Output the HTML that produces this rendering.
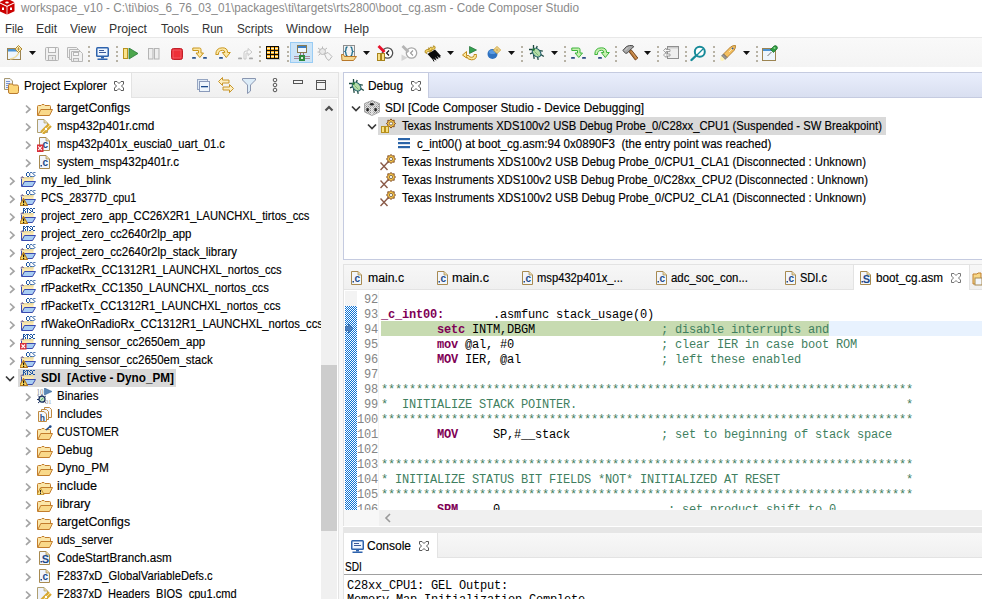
<!DOCTYPE html>
<html><head><meta charset="utf-8"><style>
html,body{margin:0;padding:0;width:982px;height:599px;overflow:hidden;background:#fff;position:relative}
body{font-family:'Liberation Sans', sans-serif}
</style></head><body>
<div style="position:absolute;left:0px;top:0px;width:982px;height:37px;background:#fff"></div><div style="position:absolute;left:0px;top:37px;width:982px;height:30px;background:linear-gradient(#f9f9f9,#f4f4f4);border-top:1px solid #e8e8e8;box-sizing:border-box"></div><div style="position:absolute;left:0px;top:67px;width:982px;height:532px;background:#f8f8f8"></div><div style="position:absolute;left:0px;top:67px;width:982px;height:5px;background:#fff"></div><div style="position:absolute;left:0px;top:72px;width:339px;height:527px;background:#fff;border-right:1px solid #e3e3e3;border-top:1px solid #e3e3e3;box-sizing:border-box"></div><div style="position:absolute;left:131px;top:73px;width:207px;height:24px;background:linear-gradient(#f7f7f7,#f0f0f0);border-left:1px solid #e3e3e3;box-sizing:border-box"></div><div style="position:absolute;left:131px;top:97px;width:207px;height:1px;background:#e3e3e3"></div><div style="position:absolute;left:321px;top:99px;width:16px;height:500px;background:#f0f0f0"></div><div style="position:absolute;left:321px;top:365px;width:16px;height:166px;background:#cdcdcd"></div><svg style="position:absolute;left:24px;top:104px" width="8" height="11" viewBox="0 0 8 11"><path d="M2 1.5 L6 5.2 L2 8.9" fill="none" stroke="#a4a4a4" stroke-width="1.7"/></svg><svg style="position:absolute;left:37px;top:101px" width="16" height="16" viewBox="0 0 16 16"><path d="M0.5 14.5 V5.5 Q0.5 4.5 1.5 4.5 H4 L5 3.5 H7 L8 4.5 H12.5 Q13.5 4.5 13.5 5.5 V8" fill="#fbe6a8" stroke="#c27d2c"/><path d="M0.8 14.5 L3.8 8.5 H15.5 L12.5 14.5 Z" fill="#f9d98a" stroke="#c27d2c" stroke-linejoin="round"/></svg><svg style="position:absolute;left:24px;top:122px" width="8" height="11" viewBox="0 0 8 11"><path d="M2 1.5 L6 5.2 L2 8.9" fill="none" stroke="#a4a4a4" stroke-width="1.7"/></svg><svg style="position:absolute;left:37px;top:118px" width="16" height="16" viewBox="0 0 16 16"><path d="M0.5 1.5 H7 L10.5 5 V14.5 H0.5 Z" fill="#eef2fb" stroke="#b0a070"/><path d="M7 1.5 V5 H10.5" fill="#e8d8a8" stroke="#b0a070" stroke-width="0.7"/><path d="M4 14 L12 6 M6 16 L14 8" stroke="#d8a830" stroke-width="2.2"/><path d="M5 15 L13 7" stroke="#f8e090" stroke-width="1"/><circle cx="9" cy="11" r="1.2" fill="#fff"/></svg><svg style="position:absolute;left:24px;top:140px" width="8" height="11" viewBox="0 0 8 11"><path d="M2 1.5 L6 5.2 L2 8.9" fill="none" stroke="#a4a4a4" stroke-width="1.7"/></svg><svg style="position:absolute;left:37px;top:136px" width="16" height="16" viewBox="0 0 16 16"><path d="M2.5 1.5 H9 L12.5 5 V14.5 H2.5 Z" fill="#f2f6fc" stroke="#a88a50"/><path d="M9 1.5 V5 H12.5" fill="#e8d8a8" stroke="#a88a50" stroke-width="0.7"/><text x="8.3" y="12" font-family="Liberation Sans" font-size="10" font-weight="bold" fill="#1e4a8a" text-anchor="middle">c</text><rect x="3.5" y="11" width="1.5" height="1.5" fill="#1e4a8a"/><rect x="-0.5" y="8.5" width="7" height="7.5" fill="#d8303a"/><path d="M1.2 10.3 L4.8 14.2 M4.8 10.3 L1.2 14.2" stroke="#fff" stroke-width="1.1"/></svg><svg style="position:absolute;left:24px;top:158px" width="8" height="11" viewBox="0 0 8 11"><path d="M2 1.5 L6 5.2 L2 8.9" fill="none" stroke="#a4a4a4" stroke-width="1.7"/></svg><svg style="position:absolute;left:37px;top:154px" width="16" height="16" viewBox="0 0 16 16"><path d="M2.5 1.5 H9 L12.5 5 V14.5 H2.5 Z" fill="#f2f6fc" stroke="#a88a50"/><path d="M9 1.5 V5 H12.5" fill="#e8d8a8" stroke="#a88a50" stroke-width="0.7"/><text x="8.3" y="12" font-family="Liberation Sans" font-size="10" font-weight="bold" fill="#1e4a8a" text-anchor="middle">c</text><rect x="3.5" y="11" width="1.5" height="1.5" fill="#1e4a8a"/></svg><svg style="position:absolute;left:8px;top:176px" width="8" height="11" viewBox="0 0 8 11"><path d="M2 1.5 L6 5.2 L2 8.9" fill="none" stroke="#a4a4a4" stroke-width="1.7"/></svg><svg style="position:absolute;left:20px;top:172px" width="16" height="16" viewBox="0 0 16 16"><rect x="1.5" y="5" width="12" height="9.5" fill="#fbe9b0"/><rect x="3" y="5" width="10.5" height="1.6" fill="#e8d8a0"/><path d="M0.5 6 L2.5 4.5 L4 6" fill="#8a7a98" stroke="#8a7a98" stroke-width="1"/><path d="M1.5 6.5 V14.5" stroke="#3a4ab0" stroke-width="1"/><path d="M1.8 14.5 L4.5 9.5 H15.5 L12.5 14.5 Z" fill="#a8cdf4" stroke="#3a4ab0" stroke-linejoin="round"/><rect x="7.00" y="0" width="1" height="1" fill="#1f55a0"/><rect x="8.00" y="0" width="1" height="1" fill="#1f55a0"/><rect x="6.00" y="1" width="1" height="1" fill="#1f55a0"/><rect x="6.00" y="2" width="1" height="1" fill="#1f55a0"/><rect x="6.00" y="3" width="1" height="1" fill="#1f55a0"/><rect x="7.00" y="4" width="1" height="1" fill="#1f55a0"/><rect x="8.00" y="4" width="1" height="1" fill="#1f55a0"/><rect x="10.20" y="0" width="1" height="1" fill="#1f55a0"/><rect x="11.20" y="0" width="1" height="1" fill="#1f55a0"/><rect x="9.20" y="1" width="1" height="1" fill="#1f55a0"/><rect x="9.20" y="2" width="1" height="1" fill="#1f55a0"/><rect x="9.20" y="3" width="1" height="1" fill="#1f55a0"/><rect x="10.20" y="4" width="1" height="1" fill="#1f55a0"/><rect x="11.20" y="4" width="1" height="1" fill="#1f55a0"/><rect x="13.40" y="0" width="1" height="1" fill="#1f55a0"/><rect x="14.40" y="0" width="1" height="1" fill="#1f55a0"/><rect x="12.40" y="1" width="1" height="1" fill="#1f55a0"/><rect x="13.40" y="2" width="1" height="1" fill="#1f55a0"/><rect x="14.40" y="3" width="1" height="1" fill="#1f55a0"/><rect x="12.40" y="4" width="1" height="1" fill="#1f55a0"/><rect x="13.40" y="4" width="1" height="1" fill="#1f55a0"/></svg><svg style="position:absolute;left:8px;top:194px" width="8" height="11" viewBox="0 0 8 11"><path d="M2 1.5 L6 5.2 L2 8.9" fill="none" stroke="#a4a4a4" stroke-width="1.7"/></svg><svg style="position:absolute;left:20px;top:190px" width="16" height="16" viewBox="0 0 16 16"><rect x="1.5" y="5" width="12" height="9.5" fill="#fbe9b0"/><rect x="3" y="5" width="10.5" height="1.6" fill="#e8d8a0"/><path d="M0.5 6 L2.5 4.5 L4 6" fill="#8a7a98" stroke="#8a7a98" stroke-width="1"/><path d="M1.5 6.5 V14.5" stroke="#3a4ab0" stroke-width="1"/><path d="M1.8 14.5 L4.5 9.5 H15.5 L12.5 14.5 Z" fill="#a8cdf4" stroke="#3a4ab0" stroke-linejoin="round"/><rect x="7.00" y="0" width="1" height="1" fill="#1f55a0"/><rect x="8.00" y="0" width="1" height="1" fill="#1f55a0"/><rect x="6.00" y="1" width="1" height="1" fill="#1f55a0"/><rect x="6.00" y="2" width="1" height="1" fill="#1f55a0"/><rect x="6.00" y="3" width="1" height="1" fill="#1f55a0"/><rect x="7.00" y="4" width="1" height="1" fill="#1f55a0"/><rect x="8.00" y="4" width="1" height="1" fill="#1f55a0"/><rect x="10.20" y="0" width="1" height="1" fill="#1f55a0"/><rect x="11.20" y="0" width="1" height="1" fill="#1f55a0"/><rect x="9.20" y="1" width="1" height="1" fill="#1f55a0"/><rect x="9.20" y="2" width="1" height="1" fill="#1f55a0"/><rect x="9.20" y="3" width="1" height="1" fill="#1f55a0"/><rect x="10.20" y="4" width="1" height="1" fill="#1f55a0"/><rect x="11.20" y="4" width="1" height="1" fill="#1f55a0"/><rect x="13.40" y="0" width="1" height="1" fill="#1f55a0"/><rect x="14.40" y="0" width="1" height="1" fill="#1f55a0"/><rect x="12.40" y="1" width="1" height="1" fill="#1f55a0"/><rect x="13.40" y="2" width="1" height="1" fill="#1f55a0"/><rect x="14.40" y="3" width="1" height="1" fill="#1f55a0"/><rect x="12.40" y="4" width="1" height="1" fill="#1f55a0"/><rect x="13.40" y="4" width="1" height="1" fill="#1f55a0"/><path d="M3.5 8.5 L7.5 15.5 H-0.5 Z" fill="#f8d860" stroke="#b87a1c" stroke-width="1.1" stroke-linejoin="round"/><rect x="3" y="10.5" width="1.2" height="2.8" fill="#111"/><rect x="3" y="14" width="1.2" height="1.2" fill="#111"/></svg><svg style="position:absolute;left:8px;top:212px" width="8" height="11" viewBox="0 0 8 11"><path d="M2 1.5 L6 5.2 L2 8.9" fill="none" stroke="#a4a4a4" stroke-width="1.7"/></svg><svg style="position:absolute;left:20px;top:208px" width="16" height="16" viewBox="0 0 16 16"><rect x="1.5" y="5" width="12" height="9.5" fill="#fbe9b0"/><rect x="3" y="5" width="10.5" height="1.6" fill="#e8d8a0"/><path d="M0.5 6 L2.5 4.5 L4 6" fill="#8a7a98" stroke="#8a7a98" stroke-width="1"/><path d="M1.5 6.5 V14.5" stroke="#3a4ab0" stroke-width="1"/><path d="M1.8 14.5 L4.5 9.5 H15.5 L12.5 14.5 Z" fill="#a8cdf4" stroke="#3a4ab0" stroke-linejoin="round"/><rect x="3.00" y="0" width="1" height="1" fill="#1f55a0"/><rect x="4.00" y="0" width="1" height="1" fill="#1f55a0"/><rect x="3.00" y="1" width="1" height="1" fill="#1f55a0"/><rect x="5.00" y="1" width="1" height="1" fill="#1f55a0"/><rect x="3.00" y="2" width="1" height="1" fill="#1f55a0"/><rect x="4.00" y="2" width="1" height="1" fill="#1f55a0"/><rect x="3.00" y="3" width="1" height="1" fill="#1f55a0"/><rect x="5.00" y="3" width="1" height="1" fill="#1f55a0"/><rect x="3.00" y="4" width="1" height="1" fill="#1f55a0"/><rect x="5.00" y="4" width="1" height="1" fill="#1f55a0"/><rect x="6.00" y="0" width="1" height="1" fill="#1f55a0"/><rect x="7.00" y="0" width="1" height="1" fill="#1f55a0"/><rect x="8.00" y="0" width="1" height="1" fill="#1f55a0"/><rect x="7.00" y="1" width="1" height="1" fill="#1f55a0"/><rect x="7.00" y="2" width="1" height="1" fill="#1f55a0"/><rect x="7.00" y="3" width="1" height="1" fill="#1f55a0"/><rect x="7.00" y="4" width="1" height="1" fill="#1f55a0"/><rect x="10.00" y="0" width="1" height="1" fill="#1f55a0"/><rect x="11.00" y="0" width="1" height="1" fill="#1f55a0"/><rect x="9.00" y="1" width="1" height="1" fill="#1f55a0"/><rect x="10.00" y="2" width="1" height="1" fill="#1f55a0"/><rect x="11.00" y="3" width="1" height="1" fill="#1f55a0"/><rect x="9.00" y="4" width="1" height="1" fill="#1f55a0"/><rect x="10.00" y="4" width="1" height="1" fill="#1f55a0"/><rect x="13.00" y="0" width="1" height="1" fill="#1f55a0"/><rect x="14.00" y="0" width="1" height="1" fill="#1f55a0"/><rect x="12.00" y="1" width="1" height="1" fill="#1f55a0"/><rect x="12.00" y="2" width="1" height="1" fill="#1f55a0"/><rect x="12.00" y="3" width="1" height="1" fill="#1f55a0"/><rect x="13.00" y="4" width="1" height="1" fill="#1f55a0"/><rect x="14.00" y="4" width="1" height="1" fill="#1f55a0"/><path d="M3.5 8.5 L7.5 15.5 H-0.5 Z" fill="#f8d860" stroke="#b87a1c" stroke-width="1.1" stroke-linejoin="round"/><rect x="3" y="10.5" width="1.2" height="2.8" fill="#111"/><rect x="3" y="14" width="1.2" height="1.2" fill="#111"/></svg><svg style="position:absolute;left:8px;top:230px" width="8" height="11" viewBox="0 0 8 11"><path d="M2 1.5 L6 5.2 L2 8.9" fill="none" stroke="#a4a4a4" stroke-width="1.7"/></svg><svg style="position:absolute;left:20px;top:226px" width="16" height="16" viewBox="0 0 16 16"><rect x="1.5" y="5" width="12" height="9.5" fill="#fbe9b0"/><rect x="3" y="5" width="10.5" height="1.6" fill="#e8d8a0"/><path d="M0.5 6 L2.5 4.5 L4 6" fill="#8a7a98" stroke="#8a7a98" stroke-width="1"/><path d="M1.5 6.5 V14.5" stroke="#3a4ab0" stroke-width="1"/><path d="M1.8 14.5 L4.5 9.5 H15.5 L12.5 14.5 Z" fill="#a8cdf4" stroke="#3a4ab0" stroke-linejoin="round"/><rect x="3.00" y="0" width="1" height="1" fill="#1f55a0"/><rect x="4.00" y="0" width="1" height="1" fill="#1f55a0"/><rect x="3.00" y="1" width="1" height="1" fill="#1f55a0"/><rect x="5.00" y="1" width="1" height="1" fill="#1f55a0"/><rect x="3.00" y="2" width="1" height="1" fill="#1f55a0"/><rect x="4.00" y="2" width="1" height="1" fill="#1f55a0"/><rect x="3.00" y="3" width="1" height="1" fill="#1f55a0"/><rect x="5.00" y="3" width="1" height="1" fill="#1f55a0"/><rect x="3.00" y="4" width="1" height="1" fill="#1f55a0"/><rect x="5.00" y="4" width="1" height="1" fill="#1f55a0"/><rect x="6.00" y="0" width="1" height="1" fill="#1f55a0"/><rect x="7.00" y="0" width="1" height="1" fill="#1f55a0"/><rect x="8.00" y="0" width="1" height="1" fill="#1f55a0"/><rect x="7.00" y="1" width="1" height="1" fill="#1f55a0"/><rect x="7.00" y="2" width="1" height="1" fill="#1f55a0"/><rect x="7.00" y="3" width="1" height="1" fill="#1f55a0"/><rect x="7.00" y="4" width="1" height="1" fill="#1f55a0"/><rect x="10.00" y="0" width="1" height="1" fill="#1f55a0"/><rect x="11.00" y="0" width="1" height="1" fill="#1f55a0"/><rect x="9.00" y="1" width="1" height="1" fill="#1f55a0"/><rect x="10.00" y="2" width="1" height="1" fill="#1f55a0"/><rect x="11.00" y="3" width="1" height="1" fill="#1f55a0"/><rect x="9.00" y="4" width="1" height="1" fill="#1f55a0"/><rect x="10.00" y="4" width="1" height="1" fill="#1f55a0"/><rect x="13.00" y="0" width="1" height="1" fill="#1f55a0"/><rect x="14.00" y="0" width="1" height="1" fill="#1f55a0"/><rect x="12.00" y="1" width="1" height="1" fill="#1f55a0"/><rect x="12.00" y="2" width="1" height="1" fill="#1f55a0"/><rect x="12.00" y="3" width="1" height="1" fill="#1f55a0"/><rect x="13.00" y="4" width="1" height="1" fill="#1f55a0"/><rect x="14.00" y="4" width="1" height="1" fill="#1f55a0"/></svg><svg style="position:absolute;left:8px;top:248px" width="8" height="11" viewBox="0 0 8 11"><path d="M2 1.5 L6 5.2 L2 8.9" fill="none" stroke="#a4a4a4" stroke-width="1.7"/></svg><svg style="position:absolute;left:20px;top:244px" width="16" height="16" viewBox="0 0 16 16"><rect x="1.5" y="5" width="12" height="9.5" fill="#fbe9b0"/><rect x="3" y="5" width="10.5" height="1.6" fill="#e8d8a0"/><path d="M0.5 6 L2.5 4.5 L4 6" fill="#8a7a98" stroke="#8a7a98" stroke-width="1"/><path d="M1.5 6.5 V14.5" stroke="#3a4ab0" stroke-width="1"/><path d="M1.8 14.5 L4.5 9.5 H15.5 L12.5 14.5 Z" fill="#a8cdf4" stroke="#3a4ab0" stroke-linejoin="round"/><rect x="7.00" y="0" width="1" height="1" fill="#1f55a0"/><rect x="8.00" y="0" width="1" height="1" fill="#1f55a0"/><rect x="6.00" y="1" width="1" height="1" fill="#1f55a0"/><rect x="6.00" y="2" width="1" height="1" fill="#1f55a0"/><rect x="6.00" y="3" width="1" height="1" fill="#1f55a0"/><rect x="7.00" y="4" width="1" height="1" fill="#1f55a0"/><rect x="8.00" y="4" width="1" height="1" fill="#1f55a0"/><rect x="10.20" y="0" width="1" height="1" fill="#1f55a0"/><rect x="11.20" y="0" width="1" height="1" fill="#1f55a0"/><rect x="9.20" y="1" width="1" height="1" fill="#1f55a0"/><rect x="9.20" y="2" width="1" height="1" fill="#1f55a0"/><rect x="9.20" y="3" width="1" height="1" fill="#1f55a0"/><rect x="10.20" y="4" width="1" height="1" fill="#1f55a0"/><rect x="11.20" y="4" width="1" height="1" fill="#1f55a0"/><rect x="13.40" y="0" width="1" height="1" fill="#1f55a0"/><rect x="14.40" y="0" width="1" height="1" fill="#1f55a0"/><rect x="12.40" y="1" width="1" height="1" fill="#1f55a0"/><rect x="13.40" y="2" width="1" height="1" fill="#1f55a0"/><rect x="14.40" y="3" width="1" height="1" fill="#1f55a0"/><rect x="12.40" y="4" width="1" height="1" fill="#1f55a0"/><rect x="13.40" y="4" width="1" height="1" fill="#1f55a0"/><path d="M3.5 8.5 L7.5 15.5 H-0.5 Z" fill="#f8d860" stroke="#b87a1c" stroke-width="1.1" stroke-linejoin="round"/><rect x="3" y="10.5" width="1.2" height="2.8" fill="#111"/><rect x="3" y="14" width="1.2" height="1.2" fill="#111"/></svg><svg style="position:absolute;left:8px;top:266px" width="8" height="11" viewBox="0 0 8 11"><path d="M2 1.5 L6 5.2 L2 8.9" fill="none" stroke="#a4a4a4" stroke-width="1.7"/></svg><svg style="position:absolute;left:20px;top:262px" width="16" height="16" viewBox="0 0 16 16"><rect x="1.5" y="5" width="12" height="9.5" fill="#fbe9b0"/><rect x="3" y="5" width="10.5" height="1.6" fill="#e8d8a0"/><path d="M0.5 6 L2.5 4.5 L4 6" fill="#8a7a98" stroke="#8a7a98" stroke-width="1"/><path d="M1.5 6.5 V14.5" stroke="#3a4ab0" stroke-width="1"/><path d="M1.8 14.5 L4.5 9.5 H15.5 L12.5 14.5 Z" fill="#a8cdf4" stroke="#3a4ab0" stroke-linejoin="round"/><rect x="7.00" y="0" width="1" height="1" fill="#1f55a0"/><rect x="8.00" y="0" width="1" height="1" fill="#1f55a0"/><rect x="6.00" y="1" width="1" height="1" fill="#1f55a0"/><rect x="6.00" y="2" width="1" height="1" fill="#1f55a0"/><rect x="6.00" y="3" width="1" height="1" fill="#1f55a0"/><rect x="7.00" y="4" width="1" height="1" fill="#1f55a0"/><rect x="8.00" y="4" width="1" height="1" fill="#1f55a0"/><rect x="10.20" y="0" width="1" height="1" fill="#1f55a0"/><rect x="11.20" y="0" width="1" height="1" fill="#1f55a0"/><rect x="9.20" y="1" width="1" height="1" fill="#1f55a0"/><rect x="9.20" y="2" width="1" height="1" fill="#1f55a0"/><rect x="9.20" y="3" width="1" height="1" fill="#1f55a0"/><rect x="10.20" y="4" width="1" height="1" fill="#1f55a0"/><rect x="11.20" y="4" width="1" height="1" fill="#1f55a0"/><rect x="13.40" y="0" width="1" height="1" fill="#1f55a0"/><rect x="14.40" y="0" width="1" height="1" fill="#1f55a0"/><rect x="12.40" y="1" width="1" height="1" fill="#1f55a0"/><rect x="13.40" y="2" width="1" height="1" fill="#1f55a0"/><rect x="14.40" y="3" width="1" height="1" fill="#1f55a0"/><rect x="12.40" y="4" width="1" height="1" fill="#1f55a0"/><rect x="13.40" y="4" width="1" height="1" fill="#1f55a0"/></svg><svg style="position:absolute;left:8px;top:284px" width="8" height="11" viewBox="0 0 8 11"><path d="M2 1.5 L6 5.2 L2 8.9" fill="none" stroke="#a4a4a4" stroke-width="1.7"/></svg><svg style="position:absolute;left:20px;top:280px" width="16" height="16" viewBox="0 0 16 16"><rect x="1.5" y="5" width="12" height="9.5" fill="#fbe9b0"/><rect x="3" y="5" width="10.5" height="1.6" fill="#e8d8a0"/><path d="M0.5 6 L2.5 4.5 L4 6" fill="#8a7a98" stroke="#8a7a98" stroke-width="1"/><path d="M1.5 6.5 V14.5" stroke="#3a4ab0" stroke-width="1"/><path d="M1.8 14.5 L4.5 9.5 H15.5 L12.5 14.5 Z" fill="#a8cdf4" stroke="#3a4ab0" stroke-linejoin="round"/><rect x="7.00" y="0" width="1" height="1" fill="#1f55a0"/><rect x="8.00" y="0" width="1" height="1" fill="#1f55a0"/><rect x="6.00" y="1" width="1" height="1" fill="#1f55a0"/><rect x="6.00" y="2" width="1" height="1" fill="#1f55a0"/><rect x="6.00" y="3" width="1" height="1" fill="#1f55a0"/><rect x="7.00" y="4" width="1" height="1" fill="#1f55a0"/><rect x="8.00" y="4" width="1" height="1" fill="#1f55a0"/><rect x="10.20" y="0" width="1" height="1" fill="#1f55a0"/><rect x="11.20" y="0" width="1" height="1" fill="#1f55a0"/><rect x="9.20" y="1" width="1" height="1" fill="#1f55a0"/><rect x="9.20" y="2" width="1" height="1" fill="#1f55a0"/><rect x="9.20" y="3" width="1" height="1" fill="#1f55a0"/><rect x="10.20" y="4" width="1" height="1" fill="#1f55a0"/><rect x="11.20" y="4" width="1" height="1" fill="#1f55a0"/><rect x="13.40" y="0" width="1" height="1" fill="#1f55a0"/><rect x="14.40" y="0" width="1" height="1" fill="#1f55a0"/><rect x="12.40" y="1" width="1" height="1" fill="#1f55a0"/><rect x="13.40" y="2" width="1" height="1" fill="#1f55a0"/><rect x="14.40" y="3" width="1" height="1" fill="#1f55a0"/><rect x="12.40" y="4" width="1" height="1" fill="#1f55a0"/><rect x="13.40" y="4" width="1" height="1" fill="#1f55a0"/></svg><svg style="position:absolute;left:8px;top:302px" width="8" height="11" viewBox="0 0 8 11"><path d="M2 1.5 L6 5.2 L2 8.9" fill="none" stroke="#a4a4a4" stroke-width="1.7"/></svg><svg style="position:absolute;left:20px;top:298px" width="16" height="16" viewBox="0 0 16 16"><rect x="1.5" y="5" width="12" height="9.5" fill="#fbe9b0"/><rect x="3" y="5" width="10.5" height="1.6" fill="#e8d8a0"/><path d="M0.5 6 L2.5 4.5 L4 6" fill="#8a7a98" stroke="#8a7a98" stroke-width="1"/><path d="M1.5 6.5 V14.5" stroke="#3a4ab0" stroke-width="1"/><path d="M1.8 14.5 L4.5 9.5 H15.5 L12.5 14.5 Z" fill="#a8cdf4" stroke="#3a4ab0" stroke-linejoin="round"/><rect x="7.00" y="0" width="1" height="1" fill="#1f55a0"/><rect x="8.00" y="0" width="1" height="1" fill="#1f55a0"/><rect x="6.00" y="1" width="1" height="1" fill="#1f55a0"/><rect x="6.00" y="2" width="1" height="1" fill="#1f55a0"/><rect x="6.00" y="3" width="1" height="1" fill="#1f55a0"/><rect x="7.00" y="4" width="1" height="1" fill="#1f55a0"/><rect x="8.00" y="4" width="1" height="1" fill="#1f55a0"/><rect x="10.20" y="0" width="1" height="1" fill="#1f55a0"/><rect x="11.20" y="0" width="1" height="1" fill="#1f55a0"/><rect x="9.20" y="1" width="1" height="1" fill="#1f55a0"/><rect x="9.20" y="2" width="1" height="1" fill="#1f55a0"/><rect x="9.20" y="3" width="1" height="1" fill="#1f55a0"/><rect x="10.20" y="4" width="1" height="1" fill="#1f55a0"/><rect x="11.20" y="4" width="1" height="1" fill="#1f55a0"/><rect x="13.40" y="0" width="1" height="1" fill="#1f55a0"/><rect x="14.40" y="0" width="1" height="1" fill="#1f55a0"/><rect x="12.40" y="1" width="1" height="1" fill="#1f55a0"/><rect x="13.40" y="2" width="1" height="1" fill="#1f55a0"/><rect x="14.40" y="3" width="1" height="1" fill="#1f55a0"/><rect x="12.40" y="4" width="1" height="1" fill="#1f55a0"/><rect x="13.40" y="4" width="1" height="1" fill="#1f55a0"/></svg><svg style="position:absolute;left:8px;top:320px" width="8" height="11" viewBox="0 0 8 11"><path d="M2 1.5 L6 5.2 L2 8.9" fill="none" stroke="#a4a4a4" stroke-width="1.7"/></svg><svg style="position:absolute;left:20px;top:316px" width="16" height="16" viewBox="0 0 16 16"><rect x="1.5" y="5" width="12" height="9.5" fill="#fbe9b0"/><rect x="3" y="5" width="10.5" height="1.6" fill="#e8d8a0"/><path d="M0.5 6 L2.5 4.5 L4 6" fill="#8a7a98" stroke="#8a7a98" stroke-width="1"/><path d="M1.5 6.5 V14.5" stroke="#3a4ab0" stroke-width="1"/><path d="M1.8 14.5 L4.5 9.5 H15.5 L12.5 14.5 Z" fill="#a8cdf4" stroke="#3a4ab0" stroke-linejoin="round"/><rect x="7.00" y="0" width="1" height="1" fill="#1f55a0"/><rect x="8.00" y="0" width="1" height="1" fill="#1f55a0"/><rect x="6.00" y="1" width="1" height="1" fill="#1f55a0"/><rect x="6.00" y="2" width="1" height="1" fill="#1f55a0"/><rect x="6.00" y="3" width="1" height="1" fill="#1f55a0"/><rect x="7.00" y="4" width="1" height="1" fill="#1f55a0"/><rect x="8.00" y="4" width="1" height="1" fill="#1f55a0"/><rect x="10.20" y="0" width="1" height="1" fill="#1f55a0"/><rect x="11.20" y="0" width="1" height="1" fill="#1f55a0"/><rect x="9.20" y="1" width="1" height="1" fill="#1f55a0"/><rect x="9.20" y="2" width="1" height="1" fill="#1f55a0"/><rect x="9.20" y="3" width="1" height="1" fill="#1f55a0"/><rect x="10.20" y="4" width="1" height="1" fill="#1f55a0"/><rect x="11.20" y="4" width="1" height="1" fill="#1f55a0"/><rect x="13.40" y="0" width="1" height="1" fill="#1f55a0"/><rect x="14.40" y="0" width="1" height="1" fill="#1f55a0"/><rect x="12.40" y="1" width="1" height="1" fill="#1f55a0"/><rect x="13.40" y="2" width="1" height="1" fill="#1f55a0"/><rect x="14.40" y="3" width="1" height="1" fill="#1f55a0"/><rect x="12.40" y="4" width="1" height="1" fill="#1f55a0"/><rect x="13.40" y="4" width="1" height="1" fill="#1f55a0"/></svg><svg style="position:absolute;left:8px;top:338px" width="8" height="11" viewBox="0 0 8 11"><path d="M2 1.5 L6 5.2 L2 8.9" fill="none" stroke="#a4a4a4" stroke-width="1.7"/></svg><svg style="position:absolute;left:20px;top:334px" width="16" height="16" viewBox="0 0 16 16"><rect x="1.5" y="5" width="12" height="9.5" fill="#fbe9b0"/><rect x="3" y="5" width="10.5" height="1.6" fill="#e8d8a0"/><path d="M0.5 6 L2.5 4.5 L4 6" fill="#8a7a98" stroke="#8a7a98" stroke-width="1"/><path d="M1.5 6.5 V14.5" stroke="#3a4ab0" stroke-width="1"/><path d="M1.8 14.5 L4.5 9.5 H15.5 L12.5 14.5 Z" fill="#a8cdf4" stroke="#3a4ab0" stroke-linejoin="round"/><rect x="3.00" y="0" width="1" height="1" fill="#1f55a0"/><rect x="4.00" y="0" width="1" height="1" fill="#1f55a0"/><rect x="3.00" y="1" width="1" height="1" fill="#1f55a0"/><rect x="5.00" y="1" width="1" height="1" fill="#1f55a0"/><rect x="3.00" y="2" width="1" height="1" fill="#1f55a0"/><rect x="4.00" y="2" width="1" height="1" fill="#1f55a0"/><rect x="3.00" y="3" width="1" height="1" fill="#1f55a0"/><rect x="5.00" y="3" width="1" height="1" fill="#1f55a0"/><rect x="3.00" y="4" width="1" height="1" fill="#1f55a0"/><rect x="5.00" y="4" width="1" height="1" fill="#1f55a0"/><rect x="6.00" y="0" width="1" height="1" fill="#1f55a0"/><rect x="7.00" y="0" width="1" height="1" fill="#1f55a0"/><rect x="8.00" y="0" width="1" height="1" fill="#1f55a0"/><rect x="7.00" y="1" width="1" height="1" fill="#1f55a0"/><rect x="7.00" y="2" width="1" height="1" fill="#1f55a0"/><rect x="7.00" y="3" width="1" height="1" fill="#1f55a0"/><rect x="7.00" y="4" width="1" height="1" fill="#1f55a0"/><rect x="10.00" y="0" width="1" height="1" fill="#1f55a0"/><rect x="11.00" y="0" width="1" height="1" fill="#1f55a0"/><rect x="9.00" y="1" width="1" height="1" fill="#1f55a0"/><rect x="10.00" y="2" width="1" height="1" fill="#1f55a0"/><rect x="11.00" y="3" width="1" height="1" fill="#1f55a0"/><rect x="9.00" y="4" width="1" height="1" fill="#1f55a0"/><rect x="10.00" y="4" width="1" height="1" fill="#1f55a0"/><rect x="13.00" y="0" width="1" height="1" fill="#1f55a0"/><rect x="14.00" y="0" width="1" height="1" fill="#1f55a0"/><rect x="12.00" y="1" width="1" height="1" fill="#1f55a0"/><rect x="12.00" y="2" width="1" height="1" fill="#1f55a0"/><rect x="12.00" y="3" width="1" height="1" fill="#1f55a0"/><rect x="13.00" y="4" width="1" height="1" fill="#1f55a0"/><rect x="14.00" y="4" width="1" height="1" fill="#1f55a0"/><rect x="0" y="9" width="6.5" height="6.5" fill="#d8303a"/><path d="M1.5 10.5 L5 14 M5 10.5 L1.5 14" stroke="#fff" stroke-width="1.1"/></svg><svg style="position:absolute;left:8px;top:356px" width="8" height="11" viewBox="0 0 8 11"><path d="M2 1.5 L6 5.2 L2 8.9" fill="none" stroke="#a4a4a4" stroke-width="1.7"/></svg><svg style="position:absolute;left:20px;top:352px" width="16" height="16" viewBox="0 0 16 16"><rect x="1.5" y="5" width="12" height="9.5" fill="#fbe9b0"/><rect x="3" y="5" width="10.5" height="1.6" fill="#e8d8a0"/><path d="M0.5 6 L2.5 4.5 L4 6" fill="#8a7a98" stroke="#8a7a98" stroke-width="1"/><path d="M1.5 6.5 V14.5" stroke="#3a4ab0" stroke-width="1"/><path d="M1.8 14.5 L4.5 9.5 H15.5 L12.5 14.5 Z" fill="#a8cdf4" stroke="#3a4ab0" stroke-linejoin="round"/><rect x="7.00" y="0" width="1" height="1" fill="#1f55a0"/><rect x="8.00" y="0" width="1" height="1" fill="#1f55a0"/><rect x="6.00" y="1" width="1" height="1" fill="#1f55a0"/><rect x="6.00" y="2" width="1" height="1" fill="#1f55a0"/><rect x="6.00" y="3" width="1" height="1" fill="#1f55a0"/><rect x="7.00" y="4" width="1" height="1" fill="#1f55a0"/><rect x="8.00" y="4" width="1" height="1" fill="#1f55a0"/><rect x="10.20" y="0" width="1" height="1" fill="#1f55a0"/><rect x="11.20" y="0" width="1" height="1" fill="#1f55a0"/><rect x="9.20" y="1" width="1" height="1" fill="#1f55a0"/><rect x="9.20" y="2" width="1" height="1" fill="#1f55a0"/><rect x="9.20" y="3" width="1" height="1" fill="#1f55a0"/><rect x="10.20" y="4" width="1" height="1" fill="#1f55a0"/><rect x="11.20" y="4" width="1" height="1" fill="#1f55a0"/><rect x="13.40" y="0" width="1" height="1" fill="#1f55a0"/><rect x="14.40" y="0" width="1" height="1" fill="#1f55a0"/><rect x="12.40" y="1" width="1" height="1" fill="#1f55a0"/><rect x="13.40" y="2" width="1" height="1" fill="#1f55a0"/><rect x="14.40" y="3" width="1" height="1" fill="#1f55a0"/><rect x="12.40" y="4" width="1" height="1" fill="#1f55a0"/><rect x="13.40" y="4" width="1" height="1" fill="#1f55a0"/><path d="M3.5 8.5 L7.5 15.5 H-0.5 Z" fill="#f8d860" stroke="#b87a1c" stroke-width="1.1" stroke-linejoin="round"/><rect x="3" y="10.5" width="1.2" height="2.8" fill="#111"/><rect x="3" y="14" width="1.2" height="1.2" fill="#111"/></svg><div style="position:absolute;left:18px;top:369px;width:158px;height:18px;background:#d9d9d9"></div><svg style="position:absolute;left:5px;top:375px" width="10" height="8" viewBox="0 0 10 8"><path d="M1 1.5 L5 5.5 L9 1.5" fill="none" stroke="#3a3a3a" stroke-width="1.7"/></svg><svg style="position:absolute;left:20px;top:370px" width="16" height="16" viewBox="0 0 16 16"><rect x="1.5" y="5" width="12" height="9.5" fill="#fbe9b0"/><rect x="3" y="5" width="10.5" height="1.6" fill="#e8d8a0"/><path d="M0.5 6 L2.5 4.5 L4 6" fill="#8a7a98" stroke="#8a7a98" stroke-width="1"/><path d="M1.5 6.5 V14.5" stroke="#3a4ab0" stroke-width="1"/><path d="M1.8 14.5 L4.5 9.5 H15.5 L12.5 14.5 Z" fill="#a8cdf4" stroke="#3a4ab0" stroke-linejoin="round"/><rect x="3.00" y="0" width="1" height="1" fill="#1f55a0"/><rect x="4.00" y="0" width="1" height="1" fill="#1f55a0"/><rect x="3.00" y="1" width="1" height="1" fill="#1f55a0"/><rect x="5.00" y="1" width="1" height="1" fill="#1f55a0"/><rect x="3.00" y="2" width="1" height="1" fill="#1f55a0"/><rect x="4.00" y="2" width="1" height="1" fill="#1f55a0"/><rect x="3.00" y="3" width="1" height="1" fill="#1f55a0"/><rect x="5.00" y="3" width="1" height="1" fill="#1f55a0"/><rect x="3.00" y="4" width="1" height="1" fill="#1f55a0"/><rect x="5.00" y="4" width="1" height="1" fill="#1f55a0"/><rect x="6.00" y="0" width="1" height="1" fill="#1f55a0"/><rect x="7.00" y="0" width="1" height="1" fill="#1f55a0"/><rect x="8.00" y="0" width="1" height="1" fill="#1f55a0"/><rect x="7.00" y="1" width="1" height="1" fill="#1f55a0"/><rect x="7.00" y="2" width="1" height="1" fill="#1f55a0"/><rect x="7.00" y="3" width="1" height="1" fill="#1f55a0"/><rect x="7.00" y="4" width="1" height="1" fill="#1f55a0"/><rect x="10.00" y="0" width="1" height="1" fill="#1f55a0"/><rect x="11.00" y="0" width="1" height="1" fill="#1f55a0"/><rect x="9.00" y="1" width="1" height="1" fill="#1f55a0"/><rect x="10.00" y="2" width="1" height="1" fill="#1f55a0"/><rect x="11.00" y="3" width="1" height="1" fill="#1f55a0"/><rect x="9.00" y="4" width="1" height="1" fill="#1f55a0"/><rect x="10.00" y="4" width="1" height="1" fill="#1f55a0"/><rect x="13.00" y="0" width="1" height="1" fill="#1f55a0"/><rect x="14.00" y="0" width="1" height="1" fill="#1f55a0"/><rect x="12.00" y="1" width="1" height="1" fill="#1f55a0"/><rect x="12.00" y="2" width="1" height="1" fill="#1f55a0"/><rect x="12.00" y="3" width="1" height="1" fill="#1f55a0"/><rect x="13.00" y="4" width="1" height="1" fill="#1f55a0"/><rect x="14.00" y="4" width="1" height="1" fill="#1f55a0"/><path d="M3.5 8.5 L7.5 15.5 H-0.5 Z" fill="#f8d860" stroke="#b87a1c" stroke-width="1.1" stroke-linejoin="round"/><rect x="3" y="10.5" width="1.2" height="2.8" fill="#111"/><rect x="3" y="14" width="1.2" height="1.2" fill="#111"/></svg><svg style="position:absolute;left:24px;top:392px" width="8" height="11" viewBox="0 0 8 11"><path d="M2 1.5 L6 5.2 L2 8.9" fill="none" stroke="#a4a4a4" stroke-width="1.7"/></svg><svg style="position:absolute;left:37px;top:388px" width="16" height="16" viewBox="0 0 16 16"><text x="-0.5" y="6.5" font-family="Liberation Serif" font-size="7.5" fill="#8a8a8a" textLength="7" lengthAdjust="spacingAndGlyphs">10</text><path d="M7.5 0 L15 3.5 L7.5 7 Z" fill="#5a88b8" stroke="#3a6898" stroke-width="0.6"/><text x="8" y="15.5" font-family="Liberation Serif" font-size="7" fill="#9a9a9a" textLength="6.5" lengthAdjust="spacingAndGlyphs">01</text><path d="M1 7.5 L2.5 9 M0 11.5 H2 M1 15 L2.8 13.5 M5 6.5 V8 M8.8 8 L7.5 9.2 M8.5 14.5 L7 13" stroke="#1a3060" stroke-width="1"/><circle cx="5" cy="11.2" r="3" fill="#c8e8c8" stroke="#1a3060" stroke-width="1.3"/><path d="M3.8 12.5 L6.2 10" stroke="#3a9a5a" stroke-width="0.9"/></svg><svg style="position:absolute;left:24px;top:410px" width="8" height="11" viewBox="0 0 8 11"><path d="M2 1.5 L6 5.2 L2 8.9" fill="none" stroke="#a4a4a4" stroke-width="1.7"/></svg><svg style="position:absolute;left:37px;top:406px" width="16" height="16" viewBox="0 0 16 16"><path d="M7.5 1.5 H12.5 L14.5 3.5 V11.5 H7.5 Z" fill="#f4f6fb" stroke="#c08a40"/><path d="M4.5 3.5 H9.5 L11.5 5.5 V13.5 H4.5 Z" fill="#f4f6fb" stroke="#c08a40"/><path d="M1.5 5.5 H7 L9.5 8 V15.5 H1.5 Z" fill="#f4f6fb" stroke="#c08a40"/><text x="5.3" y="14.5" font-family="Liberation Sans" font-size="8.5" font-weight="bold" fill="#2c4a7a" text-anchor="middle">h</text></svg><svg style="position:absolute;left:24px;top:428px" width="8" height="11" viewBox="0 0 8 11"><path d="M2 1.5 L6 5.2 L2 8.9" fill="none" stroke="#a4a4a4" stroke-width="1.7"/></svg><svg style="position:absolute;left:37px;top:425px" width="16" height="16" viewBox="0 0 16 16"><path d="M0.5 14.5 V5.5 Q0.5 4.5 1.5 4.5 H4 L5 3.5 H7 L8 4.5 H12.5 Q13.5 4.5 13.5 5.5 V8" fill="#fbe6a8" stroke="#c27d2c"/><path d="M0.8 14.5 L3.8 8.5 H15.5 L12.5 14.5 Z" fill="#f9d98a" stroke="#c27d2c" stroke-linejoin="round"/><path d="M9 5 L13 1.5" stroke="#1f4a8a" stroke-width="1.6"/><circle cx="13.3" cy="1.6" r="1.3" fill="#1f4a8a"/></svg><svg style="position:absolute;left:24px;top:446px" width="8" height="11" viewBox="0 0 8 11"><path d="M2 1.5 L6 5.2 L2 8.9" fill="none" stroke="#a4a4a4" stroke-width="1.7"/></svg><svg style="position:absolute;left:37px;top:443px" width="16" height="16" viewBox="0 0 16 16"><path d="M0.5 14.5 V5.5 Q0.5 4.5 1.5 4.5 H4 L5 3.5 H7 L8 4.5 H12.5 Q13.5 4.5 13.5 5.5 V8" fill="#fbe6a8" stroke="#c27d2c"/><path d="M0.8 14.5 L3.8 8.5 H15.5 L12.5 14.5 Z" fill="#f9d98a" stroke="#c27d2c" stroke-linejoin="round"/></svg><svg style="position:absolute;left:24px;top:464px" width="8" height="11" viewBox="0 0 8 11"><path d="M2 1.5 L6 5.2 L2 8.9" fill="none" stroke="#a4a4a4" stroke-width="1.7"/></svg><svg style="position:absolute;left:37px;top:461px" width="16" height="16" viewBox="0 0 16 16"><path d="M0.5 14.5 V5.5 Q0.5 4.5 1.5 4.5 H4 L5 3.5 H7 L8 4.5 H12.5 Q13.5 4.5 13.5 5.5 V8" fill="#fbe6a8" stroke="#c27d2c"/><path d="M0.8 14.5 L3.8 8.5 H15.5 L12.5 14.5 Z" fill="#f9d98a" stroke="#c27d2c" stroke-linejoin="round"/></svg><svg style="position:absolute;left:24px;top:482px" width="8" height="11" viewBox="0 0 8 11"><path d="M2 1.5 L6 5.2 L2 8.9" fill="none" stroke="#a4a4a4" stroke-width="1.7"/></svg><svg style="position:absolute;left:37px;top:479px" width="16" height="16" viewBox="0 0 16 16"><path d="M0.5 14.5 V5.5 Q0.5 4.5 1.5 4.5 H4 L5 3.5 H7 L8 4.5 H12.5 Q13.5 4.5 13.5 5.5 V8" fill="#fbe6a8" stroke="#c27d2c"/><path d="M0.8 14.5 L3.8 8.5 H15.5 L12.5 14.5 Z" fill="#f9d98a" stroke="#c27d2c" stroke-linejoin="round"/><path d="M3.5 9 L7 15.5 H0 Z" fill="#fbe08a" stroke="#b8861c" stroke-width="0.8" stroke-linejoin="round"/><rect x="3" y="11" width="1" height="2.5" fill="#222"/><rect x="3" y="14" width="1" height="1" fill="#222"/></svg><svg style="position:absolute;left:24px;top:500px" width="8" height="11" viewBox="0 0 8 11"><path d="M2 1.5 L6 5.2 L2 8.9" fill="none" stroke="#a4a4a4" stroke-width="1.7"/></svg><svg style="position:absolute;left:37px;top:497px" width="16" height="16" viewBox="0 0 16 16"><path d="M0.5 14.5 V5.5 Q0.5 4.5 1.5 4.5 H4 L5 3.5 H7 L8 4.5 H12.5 Q13.5 4.5 13.5 5.5 V8" fill="#fbe6a8" stroke="#c27d2c"/><path d="M0.8 14.5 L3.8 8.5 H15.5 L12.5 14.5 Z" fill="#f9d98a" stroke="#c27d2c" stroke-linejoin="round"/></svg><svg style="position:absolute;left:24px;top:518px" width="8" height="11" viewBox="0 0 8 11"><path d="M2 1.5 L6 5.2 L2 8.9" fill="none" stroke="#a4a4a4" stroke-width="1.7"/></svg><svg style="position:absolute;left:37px;top:515px" width="16" height="16" viewBox="0 0 16 16"><path d="M0.5 14.5 V5.5 Q0.5 4.5 1.5 4.5 H4 L5 3.5 H7 L8 4.5 H12.5 Q13.5 4.5 13.5 5.5 V8" fill="#fbe6a8" stroke="#c27d2c"/><path d="M0.8 14.5 L3.8 8.5 H15.5 L12.5 14.5 Z" fill="#f9d98a" stroke="#c27d2c" stroke-linejoin="round"/></svg><svg style="position:absolute;left:24px;top:536px" width="8" height="11" viewBox="0 0 8 11"><path d="M2 1.5 L6 5.2 L2 8.9" fill="none" stroke="#a4a4a4" stroke-width="1.7"/></svg><svg style="position:absolute;left:37px;top:533px" width="16" height="16" viewBox="0 0 16 16"><path d="M0.5 14.5 V5.5 Q0.5 4.5 1.5 4.5 H4 L5 3.5 H7 L8 4.5 H12.5 Q13.5 4.5 13.5 5.5 V8" fill="#fbe6a8" stroke="#c27d2c"/><path d="M0.8 14.5 L3.8 8.5 H15.5 L12.5 14.5 Z" fill="#f9d98a" stroke="#c27d2c" stroke-linejoin="round"/></svg><svg style="position:absolute;left:24px;top:554px" width="8" height="11" viewBox="0 0 8 11"><path d="M2 1.5 L6 5.2 L2 8.9" fill="none" stroke="#a4a4a4" stroke-width="1.7"/></svg><svg style="position:absolute;left:37px;top:550px" width="16" height="16" viewBox="0 0 16 16"><path d="M2.5 1.5 H9 L12.5 5 V14.5 H2.5 Z" fill="#f2f6fc" stroke="#a88a50"/><path d="M9 1.5 V5 H12.5" fill="#e8d8a8" stroke="#a88a50" stroke-width="0.7"/><text x="8.5" y="13" font-family="Liberation Sans" font-size="11" font-weight="bold" fill="#1e4a8a" text-anchor="middle">S</text><rect x="3.5" y="11" width="1.5" height="1.5" fill="#1e4a8a"/></svg><svg style="position:absolute;left:24px;top:572px" width="8" height="11" viewBox="0 0 8 11"><path d="M2 1.5 L6 5.2 L2 8.9" fill="none" stroke="#a4a4a4" stroke-width="1.7"/></svg><svg style="position:absolute;left:37px;top:568px" width="16" height="16" viewBox="0 0 16 16"><path d="M2.5 1.5 H9 L12.5 5 V14.5 H2.5 Z" fill="#f2f6fc" stroke="#a88a50"/><path d="M9 1.5 V5 H12.5" fill="#e8d8a8" stroke="#a88a50" stroke-width="0.7"/><text x="8.3" y="12" font-family="Liberation Sans" font-size="10" font-weight="bold" fill="#1e4a8a" text-anchor="middle">c</text><rect x="3.5" y="11" width="1.5" height="1.5" fill="#1e4a8a"/></svg><svg style="position:absolute;left:24px;top:590px" width="8" height="11" viewBox="0 0 8 11"><path d="M2 1.5 L6 5.2 L2 8.9" fill="none" stroke="#a4a4a4" stroke-width="1.7"/></svg><svg style="position:absolute;left:37px;top:586px" width="16" height="16" viewBox="0 0 16 16"><path d="M0.5 1.5 H7 L10.5 5 V14.5 H0.5 Z" fill="#eef2fb" stroke="#b0a070"/><path d="M7 1.5 V5 H10.5" fill="#e8d8a8" stroke="#b0a070" stroke-width="0.7"/><path d="M4 14 L12 6 M6 16 L14 8" stroke="#d8a830" stroke-width="2.2"/><path d="M5 15 L13 7" stroke="#f8e090" stroke-width="1"/><circle cx="9" cy="11" r="1.2" fill="#fff"/></svg><div style="position:absolute;left:343px;top:72px;width:639px;height:188px;background:#fff;border:1px solid #c5cbe0;border-right:none;box-sizing:border-box"></div><div style="position:absolute;left:428px;top:73px;width:554px;height:24px;background:linear-gradient(#e9eefc,#d9dff0);border-left:1px solid #c5cbe0;box-sizing:border-box"></div><div style="position:absolute;left:428px;top:97px;width:554px;height:1px;background:#c5cbe0"></div><div style="position:absolute;left:378px;top:117px;width:508px;height:18px;background:#d9d9d9"></div><svg style="position:absolute;left:351px;top:105px" width="10" height="8" viewBox="0 0 10 8"><path d="M1 1.5 L5 5.5 L9 1.5" fill="none" stroke="#3a3a3a" stroke-width="1.7"/></svg><svg style="position:absolute;left:367px;top:123px" width="10" height="8" viewBox="0 0 10 8"><path d="M1 1.5 L5 5.5 L9 1.5" fill="none" stroke="#3a3a3a" stroke-width="1.7"/></svg><div style="position:absolute;left:343px;top:264px;width:639px;height:262px;background:#fff;border:1px solid #e3e3e3;border-right:none;border-bottom:none;box-sizing:border-box"></div><div style="position:absolute;left:344px;top:265px;width:638px;height:24px;background:linear-gradient(#f7f7f7,#f0f0f0)"></div><div style="position:absolute;left:853px;top:265px;width:117px;height:25px;background:#fff;border-left:1px solid #e3e3e3;border-right:1px solid #e3e3e3;box-sizing:border-box"></div><div style="position:absolute;left:344px;top:289px;width:509px;height:1px;background:#e3e3e3"></div><div style="position:absolute;left:969px;top:289px;width:13px;height:1px;background:#e3e3e3"></div><svg style="position:absolute;left:349px;top:270px" width="16" height="16" viewBox="0 0 16 16"><path d="M2.5 1.5 H9 L12.5 5 V14.5 H2.5 Z" fill="#f2f6fc" stroke="#a88a50"/><path d="M9 1.5 V5 H12.5" fill="#e8d8a8" stroke="#a88a50" stroke-width="0.7"/><text x="8.3" y="12" font-family="Liberation Sans" font-size="10" font-weight="bold" fill="#1e4a8a" text-anchor="middle">c</text><rect x="3.5" y="11" width="1.5" height="1.5" fill="#1e4a8a"/></svg><svg style="position:absolute;left:435px;top:270px" width="16" height="16" viewBox="0 0 16 16"><path d="M2.5 1.5 H9 L12.5 5 V14.5 H2.5 Z" fill="#f2f6fc" stroke="#a88a50"/><path d="M9 1.5 V5 H12.5" fill="#e8d8a8" stroke="#a88a50" stroke-width="0.7"/><text x="8.3" y="12" font-family="Liberation Sans" font-size="10" font-weight="bold" fill="#1e4a8a" text-anchor="middle">c</text><rect x="3.5" y="11" width="1.5" height="1.5" fill="#1e4a8a"/></svg><svg style="position:absolute;left:520px;top:270px" width="16" height="16" viewBox="0 0 16 16"><path d="M2.5 1.5 H9 L12.5 5 V14.5 H2.5 Z" fill="#f2f6fc" stroke="#a88a50"/><path d="M9 1.5 V5 H12.5" fill="#e8d8a8" stroke="#a88a50" stroke-width="0.7"/><text x="8.3" y="12" font-family="Liberation Sans" font-size="10" font-weight="bold" fill="#1e4a8a" text-anchor="middle">c</text><rect x="3.5" y="11" width="1.5" height="1.5" fill="#1e4a8a"/></svg><svg style="position:absolute;left:654px;top:270px" width="16" height="16" viewBox="0 0 16 16"><path d="M2.5 1.5 H9 L12.5 5 V14.5 H2.5 Z" fill="#f2f6fc" stroke="#a88a50"/><path d="M9 1.5 V5 H12.5" fill="#e8d8a8" stroke="#a88a50" stroke-width="0.7"/><text x="8.3" y="12" font-family="Liberation Sans" font-size="10" font-weight="bold" fill="#1e4a8a" text-anchor="middle">c</text><rect x="3.5" y="11" width="1.5" height="1.5" fill="#1e4a8a"/></svg><svg style="position:absolute;left:783px;top:270px" width="16" height="16" viewBox="0 0 16 16"><path d="M2.5 1.5 H9 L12.5 5 V14.5 H2.5 Z" fill="#f2f6fc" stroke="#a88a50"/><path d="M9 1.5 V5 H12.5" fill="#e8d8a8" stroke="#a88a50" stroke-width="0.7"/><text x="8.3" y="12" font-family="Liberation Sans" font-size="10" font-weight="bold" fill="#1e4a8a" text-anchor="middle">c</text><rect x="3.5" y="11" width="1.5" height="1.5" fill="#1e4a8a"/></svg><svg style="position:absolute;left:858px;top:270px" width="16" height="16" viewBox="0 0 16 16"><path d="M2.5 1.5 H9 L12.5 5 V14.5 H2.5 Z" fill="#f2f6fc" stroke="#a88a50"/><path d="M9 1.5 V5 H12.5" fill="#e8d8a8" stroke="#a88a50" stroke-width="0.7"/><text x="8.5" y="13" font-family="Liberation Sans" font-size="11" font-weight="bold" fill="#1e4a8a" text-anchor="middle">S</text><rect x="3.5" y="11" width="1.5" height="1.5" fill="#1e4a8a"/></svg><div style="position:absolute;left:345px;top:291px;width:12px;height:15px;background:#f3f3f3"></div><div style="position:absolute;left:378px;top:291px;width:1px;height:219px;background:#f4f4f4"></div><div style="position:absolute;left:345px;top:306px;width:12px;height:204px;background-color:#fff;background-image:repeating-conic-gradient(#0a72d6 0 25%, #fff 0 50%);background-size:2px 2px;background-position:0 1px"></div><div style="position:absolute;left:344px;top:510px;width:638px;height:16px;background:#f0f0f0"></div><div style="position:absolute;left:344px;top:510px;width:35px;height:16px;background:#f7f7f7"></div><div style="position:absolute;left:381px;top:321px;width:448px;height:15px;background:#c7dbb1"></div><div style="position:absolute;left:829px;top:321px;width:153px;height:15px;background:#e8f2fe"></div><div style="position:absolute;left:344px;top:291px;width:638px;height:219px;overflow:hidden"></div><div style="position:absolute;left:0;top:0;width:982px;height:510px;overflow:hidden;clip-path:inset(291px 0 0 344px)"><div style="position:absolute;left:381px;top:291px;height:15px;line-height:15px;white-space:pre;font:12.0px 'Liberation Mono', monospace;letter-spacing:-0.2px;padding-top:2.0px"></div><div style="position:absolute;left:350px;width:28px;text-align:right;top:291px;height:15px;line-height:15px;white-space:pre;font:12.0px 'Liberation Mono', monospace;letter-spacing:-0.2px;padding-top:2.0px;color:#858585">92</div><div style="position:absolute;left:381px;top:306px;height:15px;line-height:15px;white-space:pre;font:12.0px 'Liberation Mono', monospace;letter-spacing:-0.2px;padding-top:2.0px"><span style="color:#7f0055;font-weight:bold;">_c_int00:</span><span style="color:#000;">       .asmfunc stack_usage(0)</span></div><div style="position:absolute;left:350px;width:28px;text-align:right;top:306px;height:15px;line-height:15px;white-space:pre;font:12.0px 'Liberation Mono', monospace;letter-spacing:-0.2px;padding-top:2.0px;color:#858585">93</div><div style="position:absolute;left:381px;top:321px;height:15px;line-height:15px;white-space:pre;font:12.0px 'Liberation Mono', monospace;letter-spacing:-0.2px;padding-top:2.0px"><span style="color:#000;">        </span><span style="color:#7f0055;font-weight:bold;">setc</span><span style="color:#000;"> INTM,DBGM</span><span style="color:#3f7f5f;">                  ; disable interrupts and</span></div><div style="position:absolute;left:350px;width:28px;text-align:right;top:321px;height:15px;line-height:15px;white-space:pre;font:12.0px 'Liberation Mono', monospace;letter-spacing:-0.2px;padding-top:2.0px;color:#858585">94</div><div style="position:absolute;left:381px;top:336px;height:15px;line-height:15px;white-space:pre;font:12.0px 'Liberation Mono', monospace;letter-spacing:-0.2px;padding-top:2.0px"><span style="color:#000;">        </span><span style="color:#7f0055;font-weight:bold;">mov</span><span style="color:#000;"> @al, #0</span><span style="color:#3f7f5f;">                     ; clear IER in case boot ROM</span></div><div style="position:absolute;left:350px;width:28px;text-align:right;top:336px;height:15px;line-height:15px;white-space:pre;font:12.0px 'Liberation Mono', monospace;letter-spacing:-0.2px;padding-top:2.0px;color:#858585">95</div><div style="position:absolute;left:381px;top:351px;height:15px;line-height:15px;white-space:pre;font:12.0px 'Liberation Mono', monospace;letter-spacing:-0.2px;padding-top:2.0px"><span style="color:#000;">        </span><span style="color:#7f0055;font-weight:bold;">MOV</span><span style="color:#000;"> IER, @al</span><span style="color:#3f7f5f;">                    ; left these enabled</span></div><div style="position:absolute;left:350px;width:28px;text-align:right;top:351px;height:15px;line-height:15px;white-space:pre;font:12.0px 'Liberation Mono', monospace;letter-spacing:-0.2px;padding-top:2.0px;color:#858585">96</div><div style="position:absolute;left:381px;top:366px;height:15px;line-height:15px;white-space:pre;font:12.0px 'Liberation Mono', monospace;letter-spacing:-0.2px;padding-top:2.0px"></div><div style="position:absolute;left:350px;width:28px;text-align:right;top:366px;height:15px;line-height:15px;white-space:pre;font:12.0px 'Liberation Mono', monospace;letter-spacing:-0.2px;padding-top:2.0px;color:#858585">97</div><div style="position:absolute;left:381px;top:381px;height:15px;line-height:15px;white-space:pre;font:12.0px 'Liberation Mono', monospace;letter-spacing:-0.2px;padding-top:2.0px"><span style="color:#3f7f5f;">****************************************************************************</span></div><div style="position:absolute;left:350px;width:28px;text-align:right;top:381px;height:15px;line-height:15px;white-space:pre;font:12.0px 'Liberation Mono', monospace;letter-spacing:-0.2px;padding-top:2.0px;color:#858585">98</div><div style="position:absolute;left:381px;top:396px;height:15px;line-height:15px;white-space:pre;font:12.0px 'Liberation Mono', monospace;letter-spacing:-0.2px;padding-top:2.0px"><span style="color:#3f7f5f;">*  INITIALIZE STACK POINTER.                                               *</span></div><div style="position:absolute;left:350px;width:28px;text-align:right;top:396px;height:15px;line-height:15px;white-space:pre;font:12.0px 'Liberation Mono', monospace;letter-spacing:-0.2px;padding-top:2.0px;color:#858585">99</div><div style="position:absolute;left:381px;top:411px;height:15px;line-height:15px;white-space:pre;font:12.0px 'Liberation Mono', monospace;letter-spacing:-0.2px;padding-top:2.0px"><span style="color:#3f7f5f;">****************************************************************************</span></div><div style="position:absolute;left:350px;width:28px;text-align:right;top:411px;height:15px;line-height:15px;white-space:pre;font:12.0px 'Liberation Mono', monospace;letter-spacing:-0.2px;padding-top:2.0px;color:#858585">100</div><div style="position:absolute;left:381px;top:426px;height:15px;line-height:15px;white-space:pre;font:12.0px 'Liberation Mono', monospace;letter-spacing:-0.2px;padding-top:2.0px"><span style="color:#000;">        </span><span style="color:#7f0055;font-weight:bold;">MOV</span><span style="color:#000;">     SP,#__stack</span><span style="color:#3f7f5f;">             ; set to beginning of stack space</span></div><div style="position:absolute;left:350px;width:28px;text-align:right;top:426px;height:15px;line-height:15px;white-space:pre;font:12.0px 'Liberation Mono', monospace;letter-spacing:-0.2px;padding-top:2.0px;color:#858585">101</div><div style="position:absolute;left:381px;top:441px;height:15px;line-height:15px;white-space:pre;font:12.0px 'Liberation Mono', monospace;letter-spacing:-0.2px;padding-top:2.0px"></div><div style="position:absolute;left:350px;width:28px;text-align:right;top:441px;height:15px;line-height:15px;white-space:pre;font:12.0px 'Liberation Mono', monospace;letter-spacing:-0.2px;padding-top:2.0px;color:#858585">102</div><div style="position:absolute;left:381px;top:456px;height:15px;line-height:15px;white-space:pre;font:12.0px 'Liberation Mono', monospace;letter-spacing:-0.2px;padding-top:2.0px"><span style="color:#3f7f5f;">****************************************************************************</span></div><div style="position:absolute;left:350px;width:28px;text-align:right;top:456px;height:15px;line-height:15px;white-space:pre;font:12.0px 'Liberation Mono', monospace;letter-spacing:-0.2px;padding-top:2.0px;color:#858585">103</div><div style="position:absolute;left:381px;top:471px;height:15px;line-height:15px;white-space:pre;font:12.0px 'Liberation Mono', monospace;letter-spacing:-0.2px;padding-top:2.0px"><span style="color:#3f7f5f;">* INITIALIZE STATUS BIT FIELDS *NOT* INITIALIZED AT RESET                  *</span></div><div style="position:absolute;left:350px;width:28px;text-align:right;top:471px;height:15px;line-height:15px;white-space:pre;font:12.0px 'Liberation Mono', monospace;letter-spacing:-0.2px;padding-top:2.0px;color:#858585">104</div><div style="position:absolute;left:381px;top:486px;height:15px;line-height:15px;white-space:pre;font:12.0px 'Liberation Mono', monospace;letter-spacing:-0.2px;padding-top:2.0px"><span style="color:#3f7f5f;">****************************************************************************</span></div><div style="position:absolute;left:350px;width:28px;text-align:right;top:486px;height:15px;line-height:15px;white-space:pre;font:12.0px 'Liberation Mono', monospace;letter-spacing:-0.2px;padding-top:2.0px;color:#858585">105</div><div style="position:absolute;left:381px;top:501px;height:15px;line-height:15px;white-space:pre;font:12.0px 'Liberation Mono', monospace;letter-spacing:-0.2px;padding-top:2.0px"><span style="color:#000;">        </span><span style="color:#7f0055;font-weight:bold;">SPM</span><span style="color:#000;">     0</span><span style="color:#3f7f5f;">                        ; set product shift to 0</span></div><div style="position:absolute;left:350px;width:28px;text-align:right;top:501px;height:15px;line-height:15px;white-space:pre;font:12.0px 'Liberation Mono', monospace;letter-spacing:-0.2px;padding-top:2.0px;color:#858585">106</div></div><div style="position:absolute;left:343px;top:526px;width:639px;height:1px;background:#fff"></div><div style="position:absolute;left:343px;top:527px;width:639px;height:6px;background:#e6e6e6"></div><div style="position:absolute;left:343px;top:533px;width:639px;height:66px;background:#fff;border-left:1px solid #e3e3e3;box-sizing:border-box"></div><div style="position:absolute;left:437px;top:533px;width:545px;height:24px;background:linear-gradient(#f8f8f8,#f0f0f0);border-left:1px solid #e3e3e3;box-sizing:border-box"></div><div style="position:absolute;left:437px;top:557px;width:545px;height:1px;background:#e3e3e3"></div><div style="position:absolute;left:344px;top:574px;width:638px;height:1px;background:#a0a0a0"></div><div style="position:absolute;left:347px;top:577px;line-height:15px;white-space:pre;font:12.0px 'Liberation Mono', monospace;letter-spacing:-0.2px;padding-top:2.0px">C28xx_CPU1: GEL Output:
Memory Map Initialization Complete</div><svg style="position:absolute;left:0px;top:0px" width="15" height="15" viewBox="0 0 15 15"><polygon points="7,-1.5 14.5,2.2 7,5.8 -0.5,2.2" fill="#cc0000"/><polygon points="-0.5,3.2 6.6,6.8 6.6,14.6 -0.5,11.2" fill="#cc0000"/><polygon points="7.4,6.8 14.5,3.2 14.5,11.2 7.4,14.6" fill="#cc0000"/><ellipse cx="7" cy="2.5" rx="1.8" ry="0.9" fill="#fff"/><rect x="2" y="7.5" width="2" height="2.5" fill="#fff"/><rect x="10" y="7.5" width="2" height="2.5" fill="#fff"/></svg><svg style="position:absolute;left:6px;top:45px" width="17" height="16" viewBox="0 0 17 16"><rect x="1.5" y="3.5" width="13" height="11" fill="#eef6fd" stroke="#9c8452"/><rect x="2" y="4" width="12" height="2.5" fill="#4a93d4"/><path d="M4 14 Q11 13 13 7" stroke="#f0dca0" stroke-width="1.5" fill="none"/><path d="M12.5 0.5 L16 4 L12.5 7.5 L9 4 Z" fill="#fff4c8" stroke="#b08a2e"/><path d="M12.5 2 V6 M10.5 4 H14.5" stroke="#b08a2e" stroke-width="0.8"/></svg><svg style="position:absolute;left:29px;top:51px" width="7" height="4" viewBox="0 0 7 4"><path d="M0 0 H7 L3.5 4 Z" fill="#111"/></svg><svg style="position:absolute;left:363px;top:51px" width="7" height="4" viewBox="0 0 7 4"><path d="M0 0 H7 L3.5 4 Z" fill="#111"/></svg><svg style="position:absolute;left:447px;top:51px" width="7" height="4" viewBox="0 0 7 4"><path d="M0 0 H7 L3.5 4 Z" fill="#111"/></svg><svg style="position:absolute;left:508px;top:51px" width="7" height="4" viewBox="0 0 7 4"><path d="M0 0 H7 L3.5 4 Z" fill="#111"/></svg><svg style="position:absolute;left:551px;top:51px" width="7" height="4" viewBox="0 0 7 4"><path d="M0 0 H7 L3.5 4 Z" fill="#111"/></svg><svg style="position:absolute;left:644px;top:51px" width="7" height="4" viewBox="0 0 7 4"><path d="M0 0 H7 L3.5 4 Z" fill="#111"/></svg><svg style="position:absolute;left:743px;top:51px" width="7" height="4" viewBox="0 0 7 4"><path d="M0 0 H7 L3.5 4 Z" fill="#111"/></svg><svg style="position:absolute;left:44px;top:46px" width="16" height="16" viewBox="0 0 16 16"><path d="M1.5 2.5 Q1.5 1.5 2.5 1.5 H13.5 Q14.5 1.5 14.5 2.5 V13.5 Q14.5 14.5 13.5 14.5 H2.5 Q1.5 14.5 1.5 13.5 Z" fill="#f0f0f0" stroke="#b4b4b4"/><rect x="4.5" y="1.5" width="7" height="5" fill="#f8f8f8" stroke="#b4b4b4"/><rect x="4.5" y="9.5" width="7" height="5" fill="#e8e8e8" stroke="#b4b4b4"/><rect x="8" y="11" width="1" height="2.5" fill="#b4b4b4"/></svg><svg style="position:absolute;left:67px;top:46px" width="16" height="16" viewBox="0 0 16 16"><path d="M0.5 1.5 H9.5 L11.5 3.5 V11.5 H0.5 Z" fill="#f2f2f2" stroke="#b8b8b8"/><path d="M2.5 3.5 H11.5 L13.5 5.5 V13.5 H2.5 Z" fill="#f2f2f2" stroke="#b8b8b8"/><path d="M4.5 5.5 H13.5 L15.5 7.5 V15.5 H4.5 Z" fill="#f2f2f2" stroke="#b8b8b8"/><rect x="6.5" y="6.5" width="5" height="3" fill="#f8f8f8" stroke="#b8b8b8"/><rect x="6.5" y="12.5" width="5" height="3" fill="#e8e8e8" stroke="#b8b8b8"/></svg><svg style="position:absolute;left:88px;top:46px" width="2" height="16" viewBox="0 0 2 16"><rect x="0.2" y="0" width="1.6" height="2" fill="#a8a292"/><rect x="0.2" y="5" width="1.6" height="2" fill="#a8a292"/><rect x="0.2" y="9" width="1.6" height="2" fill="#a8a292"/><rect x="0.2" y="14" width="1.6" height="2" fill="#a8a292"/></svg><svg style="position:absolute;left:116px;top:46px" width="2" height="16" viewBox="0 0 2 16"><rect x="0.2" y="0" width="1.6" height="2" fill="#a8a292"/><rect x="0.2" y="5" width="1.6" height="2" fill="#a8a292"/><rect x="0.2" y="9" width="1.6" height="2" fill="#a8a292"/><rect x="0.2" y="14" width="1.6" height="2" fill="#a8a292"/></svg><svg style="position:absolute;left:259px;top:46px" width="2" height="16" viewBox="0 0 2 16"><rect x="0.2" y="0" width="1.6" height="2" fill="#a8a292"/><rect x="0.2" y="5" width="1.6" height="2" fill="#a8a292"/><rect x="0.2" y="9" width="1.6" height="2" fill="#a8a292"/><rect x="0.2" y="14" width="1.6" height="2" fill="#a8a292"/></svg><svg style="position:absolute;left:287px;top:46px" width="2" height="16" viewBox="0 0 2 16"><rect x="0.2" y="0" width="1.6" height="2" fill="#a8a292"/><rect x="0.2" y="5" width="1.6" height="2" fill="#a8a292"/><rect x="0.2" y="9" width="1.6" height="2" fill="#a8a292"/><rect x="0.2" y="14" width="1.6" height="2" fill="#a8a292"/></svg><svg style="position:absolute;left:521px;top:46px" width="2" height="16" viewBox="0 0 2 16"><rect x="0.2" y="0" width="1.6" height="2" fill="#a8a292"/><rect x="0.2" y="5" width="1.6" height="2" fill="#a8a292"/><rect x="0.2" y="9" width="1.6" height="2" fill="#a8a292"/><rect x="0.2" y="14" width="1.6" height="2" fill="#a8a292"/></svg><svg style="position:absolute;left:564px;top:46px" width="2" height="16" viewBox="0 0 2 16"><rect x="0.2" y="0" width="1.6" height="2" fill="#a8a292"/><rect x="0.2" y="5" width="1.6" height="2" fill="#a8a292"/><rect x="0.2" y="9" width="1.6" height="2" fill="#a8a292"/><rect x="0.2" y="14" width="1.6" height="2" fill="#a8a292"/></svg><svg style="position:absolute;left:615px;top:46px" width="2" height="16" viewBox="0 0 2 16"><rect x="0.2" y="0" width="1.6" height="2" fill="#a8a292"/><rect x="0.2" y="5" width="1.6" height="2" fill="#a8a292"/><rect x="0.2" y="9" width="1.6" height="2" fill="#a8a292"/><rect x="0.2" y="14" width="1.6" height="2" fill="#a8a292"/></svg><svg style="position:absolute;left:657px;top:46px" width="2" height="16" viewBox="0 0 2 16"><rect x="0.2" y="0" width="1.6" height="2" fill="#a8a292"/><rect x="0.2" y="5" width="1.6" height="2" fill="#a8a292"/><rect x="0.2" y="9" width="1.6" height="2" fill="#a8a292"/><rect x="0.2" y="14" width="1.6" height="2" fill="#a8a292"/></svg><svg style="position:absolute;left:685px;top:46px" width="2" height="16" viewBox="0 0 2 16"><rect x="0.2" y="0" width="1.6" height="2" fill="#a8a292"/><rect x="0.2" y="5" width="1.6" height="2" fill="#a8a292"/><rect x="0.2" y="9" width="1.6" height="2" fill="#a8a292"/><rect x="0.2" y="14" width="1.6" height="2" fill="#a8a292"/></svg><svg style="position:absolute;left:713px;top:46px" width="2" height="16" viewBox="0 0 2 16"><rect x="0.2" y="0" width="1.6" height="2" fill="#a8a292"/><rect x="0.2" y="5" width="1.6" height="2" fill="#a8a292"/><rect x="0.2" y="9" width="1.6" height="2" fill="#a8a292"/><rect x="0.2" y="14" width="1.6" height="2" fill="#a8a292"/></svg><svg style="position:absolute;left:756px;top:46px" width="2" height="16" viewBox="0 0 2 16"><rect x="0.2" y="0" width="1.6" height="2" fill="#a8a292"/><rect x="0.2" y="5" width="1.6" height="2" fill="#a8a292"/><rect x="0.2" y="9" width="1.6" height="2" fill="#a8a292"/><rect x="0.2" y="14" width="1.6" height="2" fill="#a8a292"/></svg><svg style="position:absolute;left:95px;top:46px" width="16" height="16" viewBox="0 0 16 16"><rect x="1" y="1" width="13" height="10" rx="1.5" fill="#2e63ad"/><rect x="2.5" y="2.5" width="10" height="7" fill="#eef6ff"/><rect x="4" y="4" width="5" height="1" fill="#3a5a9a"/><rect x="4" y="6" width="7" height="1" fill="#3a5a9a"/><rect x="6" y="11" width="3" height="1.5" fill="#2e63ad"/><rect x="2.5" y="12.5" width="10" height="1.5" fill="#2e63ad"/></svg><svg style="position:absolute;left:123px;top:48px" width="16" height="12" viewBox="0 0 16 12"><rect x="0.5" y="0.5" width="4" height="10" fill="#fbe38c" stroke="#b8931c"/><path d="M6 0 L15 5.5 L6 11 Z" fill="#4ca64c" stroke="#2a7a3a" stroke-width="0.8"/></svg><svg style="position:absolute;left:148px;top:48px" width="12" height="12" viewBox="0 0 12 12"><rect x="0.5" y="0.5" width="4.5" height="10.5" fill="#eee" stroke="#b4b4b4"/><rect x="6.5" y="0.5" width="4.5" height="10.5" fill="#eee" stroke="#b4b4b4"/></svg><svg style="position:absolute;left:171px;top:48px" width="12" height="12" viewBox="0 0 12 12"><rect x="0.5" y="0.5" width="11" height="11" rx="2" fill="#e8202c" stroke="#c02028"/><rect x="2" y="2" width="8" height="8" fill="#ee3038" stroke="#f07a80" stroke-width="0.6"/></svg><svg style="position:absolute;left:192px;top:47px" width="16" height="13" viewBox="0 0 16 13"><path d="M0.8 1 H7.5 Q9 1 9 2.5 V6 H11.5 L7.8 10.5 L4 6 H6.5 V3.5 H0.8 Z" fill="#fde9a8" stroke="#c8961e" stroke-width="1" stroke-linejoin="round"/><rect x="0" y="10" width="4" height="1.8" rx="0.9" fill="#2a5590"/><rect x="11" y="10" width="4" height="1.8" rx="0.9" fill="#2a5590"/></svg><svg style="position:absolute;left:215px;top:47px" width="16" height="13" viewBox="0 0 16 13"><path d="M0.8 7.5 Q0.8 0.8 7.5 0.8 Q12.6 0.8 12.6 5.5 H15.3 L11.3 10.5 L7.3 5.5 H9.8 Q9.8 3.3 7.5 3.3 Q3.4 3.3 3.4 7.5 Z" fill="#fde9a8" stroke="#c8961e" stroke-width="1" stroke-linejoin="round"/><rect x="4" y="10" width="4" height="1.8" rx="0.9" fill="#2a5590"/></svg><svg style="position:absolute;left:238px;top:48px" width="16" height="13" viewBox="0 0 16 13"><path d="M6 11 V5 Q6 3 8 3 H10 V0.5 L14 4 L10 7.5 V5 H8.5 Q8 5 8 5.5 V11 Z" fill="#f8f8f8" stroke="#c8c8c8"/><rect x="0" y="9.5" width="4" height="1.8" rx="0.9" fill="#aaa"/><rect x="11" y="9.5" width="4" height="1.8" rx="0.9" fill="#aaa"/></svg><svg style="position:absolute;left:266px;top:46px" width="16" height="16" viewBox="0 0 16 16"><rect x="0" y="0" width="13" height="13" fill="#0a0a0a"/><rect x="1" y="13" width="13" height="1" fill="#c8c8c8"/><rect x="13" y="1" width="1" height="13" fill="#c8c8c8"/><rect x="1" y="1" width="3" height="3" fill="#ffb020"/><rect x="1" y="2" width="3" height="1" fill="#fff2c0"/><rect x="1" y="5" width="3" height="3" fill="#ffb020"/><rect x="1" y="6" width="3" height="1" fill="#fff2c0"/><rect x="1" y="9" width="3" height="3" fill="#ffb020"/><rect x="1" y="10" width="3" height="1" fill="#fff2c0"/><rect x="5" y="1" width="3" height="3" fill="#ffb020"/><rect x="5" y="2" width="3" height="1" fill="#fff2c0"/><rect x="5" y="5" width="3" height="3" fill="#ffb020"/><rect x="5" y="6" width="3" height="1" fill="#fff2c0"/><rect x="5" y="9" width="3" height="3" fill="#ffb020"/><rect x="5" y="10" width="3" height="1" fill="#fff2c0"/><rect x="9" y="1" width="3" height="3" fill="#ffb020"/><rect x="9" y="2" width="3" height="1" fill="#fff2c0"/><rect x="9" y="5" width="3" height="3" fill="#ffb020"/><rect x="9" y="6" width="3" height="1" fill="#fff2c0"/><rect x="9" y="9" width="3" height="3" fill="#ffb020"/><rect x="9" y="10" width="3" height="1" fill="#fff2c0"/></svg><svg style="position:absolute;left:290px;top:42px" width="23" height="21" viewBox="0 0 23 21"><rect x="0.5" y="0.5" width="22" height="20" fill="#cce4f7" stroke="#99ccf4"/><rect x="7.5" y="3.5" width="9" height="7" fill="#eef6ff" stroke="#8a7a50"/><rect x="8" y="4" width="8" height="2" fill="#3b7fc4"/><rect x="10" y="11" width="1" height="3" fill="#9a6a7a"/><rect x="13" y="11" width="1" height="3" fill="#9a6a7a"/><rect x="4" y="14" width="16" height="1" fill="#a88a9a"/><rect x="4" y="16" width="16" height="1" fill="#a88a9a"/><rect x="9" y="13" width="6" height="6" fill="#2e8a3e"/><rect x="11" y="15" width="2" height="2" fill="#d8f0d8"/></svg><svg style="position:absolute;left:317px;top:46px" width="16" height="16" viewBox="0 0 16 16"><circle cx="5.5" cy="5.5" r="3" fill="#e8e8e8" stroke="#b8b8b8"/><path d="M1 2 L3 3.5 M10 2 L8 3.5 M0.5 6 H2.5 M5.5 0.5 V2.5 M1.5 9.5 L3 8" stroke="#b8b8b8"/><path d="M7.5 8 L11 6.5 L15 10.5 L12 14.5 L9.5 12.5 Z" fill="#f4f4f4" stroke="#b8b8b8"/></svg><svg style="position:absolute;left:341px;top:45px" width="16" height="17" viewBox="0 0 16 17"><rect x="2.5" y="0.5" width="11" height="11" fill="#f4f4f4" stroke="#8e8e8e"/><path d="M6.5 2 Q5 2 5 4 Q5 6 4 6.5 Q5 7 5 9 Q5 11 6.5 11 M9.5 2 Q11 2 11 4 Q11 6 12 6.5 Q11 7 11 9 Q11 11 9.5 11" stroke="#1a6a8a" stroke-width="1.3" fill="none"/><path d="M0.5 9.5 L1 15.5 H12.5 L15.5 11.5 H3.5 L2.5 9.5 Z" fill="#f5d890" stroke="#b8782a"/></svg><svg style="position:absolute;left:377px;top:45px" width="17" height="17" viewBox="0 0 17 17"><circle cx="10.5" cy="8" r="5.2" fill="#fff" stroke="#505050" stroke-width="1.3"/><path d="M12 5.5 L9.5 8 L12 10.5" stroke="#111" fill="none" stroke-width="1.1"/><path d="M1.5 1 L7.5 7" stroke="#e8102a" stroke-width="2.8"/><rect x="0.5" y="8.5" width="3" height="7" fill="#f8e08a" stroke="#a8841c"/><rect x="4.5" y="8.5" width="3" height="7" fill="#f8e08a" stroke="#a8841c"/></svg><svg style="position:absolute;left:401px;top:45px" width="17" height="17" viewBox="0 0 17 17"><circle cx="10.5" cy="8" r="5.2" fill="#fff" stroke="#a8a8a8" stroke-width="1.3"/><path d="M12 5.5 L9.5 8 L12 10.5" stroke="#999" fill="none" stroke-width="1.1"/><path d="M1.5 1 L7.5 7" stroke="#b4b4b4" stroke-width="2.8"/><path d="M0.5 9.5 L6.5 12.8 L0.5 16 Z" fill="#d4d4d4"/></svg><svg style="position:absolute;left:424px;top:45px" width="18" height="18" viewBox="0 0 18 18"><path d="M3.5 9 L11 4.5 L17 11 L9.5 15.5 Z" fill="#0a0a0a"/><path d="M9 14.5 L10 16.5 M11 13.3 L12 15.3 M13 12.1 L14 14.1 M15 10.9 L16 12.9" stroke="#0a0a0a" stroke-width="1"/><path d="M9.5 13.8 L10.3 15 M11.5 12.6 L12.3 13.8 M13.5 11.4 L14.3 12.6" stroke="#fff" stroke-width="0.7"/><path d="M1 7.5 Q0.5 5 3 4.5 L5 4.3 L4.5 2.8 L8 4.8 L5.5 7.5 L5.3 6.2 L3.5 6.5 Q2.5 7 3 8.5 Z" fill="#f6d466" stroke="#a88418" stroke-width="0.8" stroke-linejoin="round"/><path d="M11 1.5 Q12 3.8 9.5 4.5 L7.5 4.8 L8 6.3 L4.5 4.5 L7 1.8 L7.3 3 L9 2.7 Q9.8 2.4 9.2 0.8 Z" fill="#f6d466" stroke="#a88418" stroke-width="0.8" stroke-linejoin="round"/></svg><svg style="position:absolute;left:462px;top:46px" width="16" height="16" viewBox="0 0 16 16"><path d="M7.5 0.5 L14.5 4 L7.5 7.5 Z" fill="#34a050" stroke="#1e7034" stroke-width="0.7" stroke-linejoin="round"/><path d="M4.5 5.5 L0.5 9 L4.5 12 V10.5 Q5.5 13.8 9.5 13.8 Q14.5 13.8 14.5 9.5 V8.5 H12 V9.5 Q12 11.3 9.5 11.3 Q7 11.3 6.8 9.5 H4.5 Z" fill="#fde9a0" stroke="#c08a1a" stroke-width="1" stroke-linejoin="round"/></svg><svg style="position:absolute;left:487px;top:46px" width="16" height="16" viewBox="0 0 16 16"><circle cx="5.5" cy="8" r="5" fill="#2f72c0"/><ellipse cx="5.5" cy="6" rx="3.5" ry="2" fill="#5a9ae0"/><path d="M10 0.5 L13.5 4 L10 7.5 L6.5 4 Z" fill="#fff4c8" stroke="#c8961e"/><path d="M10 2 V6 M8 4 H12" stroke="#c8961e" stroke-width="0.8"/></svg><svg style="position:absolute;left:529px;top:45px" width="16" height="16" viewBox="0 0 16 16"><path d="M4.5 0 V3.2 M8.2 1 L7.2 4 M0 4.5 H3.2 M1 8.8 L3.8 7.6 M4.6 10 L5.2 13.8 M8.6 11.8 L9.2 14.8 M10.5 5.6 L13.8 6.2 M11.8 9.4 L14.8 11.6" stroke="#1e4a40" stroke-width="1.3"/><ellipse cx="7.6" cy="7.6" rx="5" ry="3.6" transform="rotate(45 7.6 7.6)" fill="#b4dca8" stroke="#23606e" stroke-width="1.1"/><path d="M5.5 6.5 L9.5 10.5" stroke="#7ab874" stroke-width="1"/><circle cx="4.6" cy="4.6" r="1.4" fill="#2a7a3a"/></svg><svg style="position:absolute;left:571px;top:47px" width="16" height="13" viewBox="0 0 16 13"><path d="M0.8 1 H7.5 Q9 1 9 2.5 V6 H11.5 L7.8 10.5 L4 6 H6.5 V3.5 H0.8 Z" fill="#c8f0b0" stroke="#3cb43c" stroke-width="1" stroke-linejoin="round"/><rect x="0" y="10" width="4" height="1.8" rx="0.9" fill="#2a4a80"/><rect x="11" y="10" width="4" height="1.8" rx="0.9" fill="#2a4a80"/></svg><svg style="position:absolute;left:594px;top:47px" width="16" height="13" viewBox="0 0 16 13"><path d="M0.8 7.5 Q0.8 0.8 7.5 0.8 Q12.6 0.8 12.6 5.5 H15.3 L11.3 10.5 L7.3 5.5 H9.8 Q9.8 3.3 7.5 3.3 Q3.4 3.3 3.4 7.5 Z" fill="#c8f0b0" stroke="#3cb43c" stroke-width="1" stroke-linejoin="round"/><rect x="4" y="10" width="4" height="1.8" rx="0.9" fill="#2a4a80"/></svg><svg style="position:absolute;left:622px;top:45px" width="16" height="16" viewBox="0 0 16 16"><path d="M6.5 6 L13.3 15 L15.8 13 L9 4.5 Z" fill="#b87a3c" stroke="#6a3a14" stroke-width="0.9" stroke-linejoin="round"/><path d="M9.5 6.5 L14.5 13.5" stroke="#e0a868" stroke-width="0.8"/><path d="M0.8 5.5 L4.5 1.5 Q7.5 -0.3 11 0.8 L11.8 1.8 L9.5 3.5 L7.8 5.5 L5 8.2 L3.5 8.2 Z" fill="#a8a8a8" stroke="#4a4a4a" stroke-width="1" stroke-linejoin="round"/><path d="M3 5.5 L6 2.5" stroke="#d8d8d8" stroke-width="0.9"/></svg><svg style="position:absolute;left:663px;top:46px" width="16" height="14" viewBox="0 0 16 14"><rect x="4.5" y="0.5" width="11" height="12" fill="#eeeeee" stroke="#909090"/><rect x="5" y="1" width="10" height="1.5" fill="#ccc"/><path d="M3 2 L0.5 4.5 L3 7 V5.5 H7 V3.5 H3 Z M3 6.5 L0.5 9 L3 11.5 V10 H7 V8 H3 Z" fill="#f8f8f8" stroke="#909090" stroke-width="0.8"/></svg><svg style="position:absolute;left:690px;top:45px" width="17" height="18" viewBox="0 0 17 18"><circle cx="9.8" cy="6.8" r="5" fill="#fff" stroke="#168a98" stroke-width="2"/><path d="M6.2 10.5 L1.5 15" stroke="#168a98" stroke-width="2.4" stroke-linecap="round"/><path d="M7 10 L13 4" stroke="#168a98" stroke-width="1.3"/></svg><svg style="position:absolute;left:720px;top:45px" width="17" height="17" viewBox="0 0 17 17"><path d="M3.5 9 L10.5 2 Q13 0.2 15.5 0.5 Q15.8 3 14 5.5 L7 12.5 Z" fill="#f4c060" stroke="#b07a28" stroke-width="0.9" stroke-linejoin="round"/><path d="M3.5 9 L7 12.5 L5 14.5 L1.5 11 Z" fill="#9a9690" stroke="#6a6660" stroke-width="0.8"/><path d="M1.5 11 L5 14.5 L2.5 16 Q0 16 0 13.5 Z" fill="#fff4b8"/><path d="M12.2 3.8 L9 7" stroke="#fff8d8" stroke-width="0.8"/><circle cx="12.6" cy="3.4" r="0.9" fill="#2a5aa8"/></svg><svg style="position:absolute;left:762px;top:45px" width="17" height="16" viewBox="0 0 17 16"><rect x="0.5" y="3.5" width="13" height="12" fill="#eef6fd" stroke="#9c8452"/><rect x="1" y="4" width="12" height="2" fill="#4a93d4"/><path d="M5.5 11 L9.5 7" stroke="#666" stroke-width="0.9"/><path d="M8.5 4.5 L12 1 Q13.5 0 15 1.5 Q16 3 15 4 L11.5 7.5 Z" fill="#2e9a40" stroke="#1a6a28" stroke-width="0.7"/><circle cx="12.5" cy="3" r="1" fill="#8ad890"/></svg><svg style="position:absolute;left:4px;top:78px" width="16" height="16" viewBox="0 0 16 16"><path d="M0.5 0.5 H6 L8.5 3 V11.5 H0.5 Z" fill="#eef2fa" stroke="#a89870"/><rect x="2" y="3" width="4" height="0.9" fill="#6a8acd"/><rect x="2" y="5" width="4" height="0.9" fill="#6a8acd"/><rect x="2" y="7" width="4" height="0.9" fill="#6a8acd"/><rect x="2" y="9" width="4" height="0.9" fill="#6a8acd"/><path d="M4.5 7.5 Q4.5 6 6 6 H8 Q9 6 9 7 H13 Q14.5 7 14.5 8.5 V13.5 Q14.5 15.5 13 15.5 H6 Q4.5 15.5 4.5 14 Z" fill="#fcd678" stroke="#b87a30"/></svg><svg style="position:absolute;left:114px;top:81px" width="10" height="10" viewBox="0 0 10 10"><path d="M0.5 0.5 H3 L5 2.5 L7 0.5 H9.5 V3 L7.5 5 L9.5 7 V9.5 H7 L5 7.5 L3 9.5 H0.5 V7 L2.5 5 L0.5 3 Z" fill="none" stroke="#5a5a5a" stroke-width="1"/></svg><svg style="position:absolute;left:197px;top:79px" width="14" height="14" viewBox="0 0 14 14"><rect x="0.5" y="0.5" width="10" height="10" fill="#dfeaf6" stroke="#96a6c2"/><rect x="2.5" y="2.5" width="10" height="10" fill="#eef6fc" stroke="#8a9aba"/><rect x="4" y="7" width="7" height="1.3" fill="#1a4a8a"/></svg><svg style="position:absolute;left:218px;top:77px" width="16" height="16" viewBox="0 0 16 16"><path d="M4.5 0.5 L0.5 4.5 L4.5 8.5 V6 H11 V3 H4.5 Z" fill="#fdeec0" stroke="#c8962a" stroke-width="1" stroke-linejoin="round"/><path d="M11.5 7.5 L15.5 11.5 L11.5 15.5 V13 H5 V10 H11.5 Z" fill="#fdeec0" stroke="#c8962a" stroke-width="1" stroke-linejoin="round"/></svg><svg style="position:absolute;left:242px;top:78px" width="14" height="16" viewBox="0 0 14 16"><path d="M0.5 0.5 H13.5 V2 L8.5 7 V13 L5.5 15.5 V7 L0.5 2 Z" fill="#dcecf8" stroke="#8a96b0" stroke-width="1"/></svg><svg style="position:absolute;left:272px;top:78px" width="6" height="15" viewBox="0 0 6 15"><circle cx="3" cy="2" r="1.8" fill="none" stroke="#555" stroke-width="1"/><circle cx="3" cy="7" r="1.8" fill="none" stroke="#555" stroke-width="1"/><circle cx="3" cy="12" r="1.8" fill="none" stroke="#555" stroke-width="1"/></svg><svg style="position:absolute;left:293px;top:80px" width="11" height="5" viewBox="0 0 11 5"><rect x="0.5" y="0.5" width="9" height="3" fill="none" stroke="#555" stroke-width="1"/></svg><svg style="position:absolute;left:316px;top:80px" width="11" height="11" viewBox="0 0 11 11"><rect x="0.5" y="0.5" width="9" height="9" fill="none" stroke="#555" stroke-width="1"/><rect x="1" y="2" width="8" height="1" fill="#555"/></svg><svg style="position:absolute;left:324px;top:104px" width="10" height="8" viewBox="0 0 10 8"><path d="M1.5 6.5 L5 3 L8.5 6.5" fill="none" stroke="#505050" stroke-width="2.2"/></svg><svg style="position:absolute;left:349px;top:79px" width="16" height="16" viewBox="0 0 16 16"><path d="M4.5 0 V3.2 M8.2 1 L7.2 4 M0 4.5 H3.2 M1 8.8 L3.8 7.6 M4.6 10 L5.2 13.8 M8.6 11.8 L9.2 14.8 M10.5 5.6 L13.8 6.2 M11.8 9.4 L14.8 11.6" stroke="#1e4a40" stroke-width="1.3"/><ellipse cx="7.6" cy="7.6" rx="5" ry="3.6" transform="rotate(45 7.6 7.6)" fill="#b4dca8" stroke="#23606e" stroke-width="1.1"/><path d="M5.5 6.5 L9.5 10.5" stroke="#7ab874" stroke-width="1"/><circle cx="4.6" cy="4.6" r="1.4" fill="#2a7a3a"/></svg><svg style="position:absolute;left:411px;top:81px" width="10" height="10" viewBox="0 0 10 10"><path d="M0.5 0.5 H3 L5 2.5 L7 0.5 H9.5 V3 L7.5 5 L9.5 7 V9.5 H7 L5 7.5 L3 9.5 H0.5 V7 L2.5 5 L0.5 3 Z" fill="none" stroke="#5a5a5a" stroke-width="1"/></svg><svg style="position:absolute;left:364px;top:100px" width="16" height="16" viewBox="0 0 16 16"><defs><pattern id="dith" width="2" height="2" patternUnits="userSpaceOnUse"><rect width="2" height="2" fill="#e0e0e0"/><rect width="1" height="1" fill="#8a8a8a"/><rect x="1" y="1" width="1" height="1" fill="#b0b0b0"/></pattern></defs><path d="M8 0.5 L15.5 3.5 V12 L8 15.5 L0.5 12 V3.5 Z" fill="url(#dith)" stroke="#9a9a9a" stroke-width="0.8"/><path d="M1.5 4.5 L8 7.5 L14.5 4.5 L8 1.8 Z" fill="#d8d8d8" opacity="0.6"/><path d="M8 7.5 V15" stroke="#f0f0f0" stroke-width="1.2"/><ellipse cx="7.8" cy="4.2" rx="2" ry="1.3" fill="#222"/><ellipse cx="3.6" cy="9.8" rx="1.3" ry="1.8" fill="#222"/><ellipse cx="11.6" cy="9.8" rx="1.3" ry="1.8" fill="#222"/></svg><svg style="position:absolute;left:380px;top:118px" width="16" height="16" viewBox="0 0 16 16"><polygon points="15.60,5.50 14.06,6.77 14.25,8.75 12.27,8.56 11.00,10.10 9.73,8.56 7.75,8.75 7.94,6.77 6.40,5.50 7.94,4.23 7.75,2.25 9.73,2.44 11.00,0.90 12.27,2.44 14.25,2.25 14.06,4.23" fill="#f6c44a" stroke="#7a4418" stroke-width="0.9" stroke-linejoin="round"/><circle cx="11" cy="5.5" r="1.6" fill="#fff" stroke="#5a4a3a" stroke-width="0.7"/><rect x="1.5" y="8.5" width="3" height="6" fill="#f8e080" stroke="#b8901c"/><rect x="5.5" y="8.5" width="3" height="6" fill="#f8e080" stroke="#b8901c"/></svg><svg style="position:absolute;left:398px;top:138px" width="12" height="11" viewBox="0 0 12 11"><rect x="0" y="0" width="12" height="2.2" fill="#2a64a8"/><rect x="0" y="4" width="12" height="2.2" fill="#2a64a8"/><rect x="0" y="8" width="12" height="2.2" fill="#2a64a8"/></svg><svg style="position:absolute;left:380px;top:154px" width="16" height="17" viewBox="0 0 16 17"><polygon points="15.60,5.00 14.06,6.27 14.25,8.25 12.27,8.06 11.00,9.60 9.73,8.06 7.75,8.25 7.94,6.27 6.40,5.00 7.94,3.73 7.75,1.75 9.73,1.94 11.00,0.40 12.27,1.94 14.25,1.75 14.06,3.73" fill="#f6c44a" stroke="#7a4418" stroke-width="0.9" stroke-linejoin="round"/><circle cx="11" cy="5" r="1.6" fill="#fff" stroke="#5a4a3a" stroke-width="0.7"/><path d="M0.5 8.5 L7.5 16 M0.5 16 L7.5 8.5 M6 10 L9 7.5" stroke="#8a5a48" stroke-width="1.4"/></svg><svg style="position:absolute;left:380px;top:172px" width="16" height="17" viewBox="0 0 16 17"><polygon points="15.60,5.00 14.06,6.27 14.25,8.25 12.27,8.06 11.00,9.60 9.73,8.06 7.75,8.25 7.94,6.27 6.40,5.00 7.94,3.73 7.75,1.75 9.73,1.94 11.00,0.40 12.27,1.94 14.25,1.75 14.06,3.73" fill="#f6c44a" stroke="#7a4418" stroke-width="0.9" stroke-linejoin="round"/><circle cx="11" cy="5" r="1.6" fill="#fff" stroke="#5a4a3a" stroke-width="0.7"/><path d="M0.5 8.5 L7.5 16 M0.5 16 L7.5 8.5 M6 10 L9 7.5" stroke="#8a5a48" stroke-width="1.4"/></svg><svg style="position:absolute;left:380px;top:190px" width="16" height="17" viewBox="0 0 16 17"><polygon points="15.60,5.00 14.06,6.27 14.25,8.25 12.27,8.06 11.00,9.60 9.73,8.06 7.75,8.25 7.94,6.27 6.40,5.00 7.94,3.73 7.75,1.75 9.73,1.94 11.00,0.40 12.27,1.94 14.25,1.75 14.06,3.73" fill="#f6c44a" stroke="#7a4418" stroke-width="0.9" stroke-linejoin="round"/><circle cx="11" cy="5" r="1.6" fill="#fff" stroke="#5a4a3a" stroke-width="0.7"/><path d="M0.5 8.5 L7.5 16 M0.5 16 L7.5 8.5 M6 10 L9 7.5" stroke="#8a5a48" stroke-width="1.4"/></svg><svg style="position:absolute;left:951px;top:273px" width="10" height="10" viewBox="0 0 10 10"><path d="M0.5 0.5 H3 L5 2.5 L7 0.5 H9.5 V3 L7.5 5 L9.5 7 V9.5 H7 L5 7.5 L3 9.5 H0.5 V7 L2.5 5 L0.5 3 Z" fill="none" stroke="#777" stroke-width="1"/></svg><svg style="position:absolute;left:972px;top:270px" width="10" height="16" viewBox="0 0 10 16"><path d="M1 4 H5 L6 3 H9 V14 H1 Z" fill="#f8d888" stroke="#c08030"/><rect x="3" y="8" width="7" height="7" fill="#f2f6fc" stroke="#a88a50"/></svg><svg style="position:absolute;left:345px;top:324px" width="8" height="9" viewBox="0 0 8 9"><path d="M0 2.5 H3.5 V0 L7.5 4.5 L3.5 9 V6.5 H0 Z" fill="#4a80c0" stroke="#2a5a98" stroke-width="0.6"/></svg><svg style="position:absolute;left:384px;top:513px" width="8" height="10" viewBox="0 0 8 10"><path d="M6 1 L2 5 L6 9" fill="none" stroke="#9a9a9a" stroke-width="1.6"/></svg><svg style="position:absolute;left:350px;top:539px" width="15" height="15" viewBox="0 0 15 15"><rect x="1" y="1" width="13" height="10" rx="1.5" fill="#2e63ad"/><rect x="2.5" y="2.5" width="10" height="7" fill="#eef6ff"/><rect x="4" y="4" width="5" height="1" fill="#3a5a9a"/><rect x="4" y="6" width="7" height="1" fill="#3a5a9a"/><rect x="6" y="11" width="3" height="1.5" fill="#2e63ad"/><rect x="2.5" y="12.5" width="10" height="1.5" fill="#2e63ad"/></svg><svg style="position:absolute;left:419px;top:541px" width="10" height="10" viewBox="0 0 10 10"><path d="M0.5 0.5 H3 L5 2.5 L7 0.5 H9.5 V3 L7.5 5 L9.5 7 V9.5 H7 L5 7.5 L3 9.5 H0.5 V7 L2.5 5 L0.5 3 Z" fill="none" stroke="#5a5a5a" stroke-width="1"/></svg>
<div style="position:absolute;left:20.5px;top:1.34px;font:12px 'Liberation Sans', sans-serif;line-height:15px;letter-spacing:0.000px;color:#8a8a8a;white-space:pre;transform:scaleX(0.9806);transform-origin:0 0;">workspace_v10 - C:\ti\bios_6_76_03_01\packages\ti\targets\rts2800\boot_cg.asm - Code Composer Studio</div><div style="position:absolute;left:4.5px;top:22.34px;font:12px 'Liberation Sans', sans-serif;line-height:15px;letter-spacing:0.000px;color:#333;white-space:pre;transform:scaleX(0.9544);transform-origin:0 0;">File</div><div style="position:absolute;left:36px;top:22.34px;font:12px 'Liberation Sans', sans-serif;line-height:15px;letter-spacing:0.000px;color:#333;white-space:pre;transform:scaleX(1.0164);transform-origin:0 0;">Edit</div><div style="position:absolute;left:70px;top:22.34px;font:12px 'Liberation Sans', sans-serif;line-height:15px;letter-spacing:0.000px;color:#333;white-space:pre;transform:scaleX(1.0084);transform-origin:0 0;">View</div><div style="position:absolute;left:109px;top:22.34px;font:12px 'Liberation Sans', sans-serif;line-height:15px;letter-spacing:0.000px;color:#333;white-space:pre;transform:scaleX(1.0179);transform-origin:0 0;">Project</div><div style="position:absolute;left:161px;top:22.34px;font:12px 'Liberation Sans', sans-serif;line-height:15px;letter-spacing:0.000px;color:#333;white-space:pre;">Tools</div><div style="position:absolute;left:202px;top:22.34px;font:12px 'Liberation Sans', sans-serif;line-height:15px;letter-spacing:0.000px;color:#333;white-space:pre;transform:scaleX(0.9518);transform-origin:0 0;">Run</div><div style="position:absolute;left:237px;top:22.34px;font:12px 'Liberation Sans', sans-serif;line-height:15px;letter-spacing:0.000px;color:#333;white-space:pre;transform:scaleX(0.9811);transform-origin:0 0;">Scripts</div><div style="position:absolute;left:286px;top:22.34px;font:12px 'Liberation Sans', sans-serif;line-height:15px;letter-spacing:0.000px;color:#333;white-space:pre;transform:scaleX(1.0557);transform-origin:0 0;">Window</div><div style="position:absolute;left:344px;top:22.34px;font:12px 'Liberation Sans', sans-serif;line-height:15px;letter-spacing:0.000px;color:#333;white-space:pre;transform:scaleX(1.0135);transform-origin:0 0;">Help</div><div style="position:absolute;left:24px;top:79.34px;font:12px 'Liberation Sans', sans-serif;line-height:15px;letter-spacing:0.000px;color:#000;white-space:pre;transform:scaleX(0.9720);transform-origin:0 0;-webkit-text-stroke:0.15px #000;">Project Explorer</div><div style="position:absolute;left:57px;top:101.34px;font:12px 'Liberation Sans', sans-serif;line-height:15px;letter-spacing:0.000px;color:#000;white-space:pre;transform:scaleX(1.0231);transform-origin:0 0;-webkit-text-stroke:0.15px #000;">targetConfigs</div><div style="position:absolute;left:57px;top:119.34px;font:12px 'Liberation Sans', sans-serif;line-height:15px;letter-spacing:0.000px;color:#000;white-space:pre;transform:scaleX(0.9864);transform-origin:0 0;-webkit-text-stroke:0.15px #000;">msp432p401r.cmd</div><div style="position:absolute;left:57px;top:137.34px;font:12px 'Liberation Sans', sans-serif;line-height:15px;letter-spacing:0.000px;color:#000;white-space:pre;transform:scaleX(0.9323);transform-origin:0 0;-webkit-text-stroke:0.15px #000;">msp432p401x_euscia0_uart_01.c</div><div style="position:absolute;left:57px;top:155.34px;font:12px 'Liberation Sans', sans-serif;line-height:15px;letter-spacing:0.000px;color:#000;white-space:pre;transform:scaleX(0.9624);transform-origin:0 0;-webkit-text-stroke:0.15px #000;">system_msp432p401r.c</div><div style="position:absolute;left:41px;top:173.34px;font:12px 'Liberation Sans', sans-serif;line-height:15px;letter-spacing:0.000px;color:#000;white-space:pre;-webkit-text-stroke:0.15px #000;">my_led_blink</div><div style="position:absolute;left:41px;top:191.34px;font:12px 'Liberation Sans', sans-serif;line-height:15px;letter-spacing:0.000px;color:#000;white-space:pre;transform:scaleX(0.8984);transform-origin:0 0;-webkit-text-stroke:0.15px #000;">PCS_28377D_cpu1</div><div style="position:absolute;left:41px;top:209.34px;font:12px 'Liberation Sans', sans-serif;line-height:15px;letter-spacing:0.000px;color:#000;white-space:pre;transform:scaleX(0.9316);transform-origin:0 0;-webkit-text-stroke:0.15px #000;">project_zero_app_CC26X2R1_LAUNCHXL_tirtos_ccs</div><div style="position:absolute;left:41px;top:227.34px;font:12px 'Liberation Sans', sans-serif;line-height:15px;letter-spacing:0.000px;color:#000;white-space:pre;transform:scaleX(0.9516);transform-origin:0 0;-webkit-text-stroke:0.15px #000;">project_zero_cc2640r2lp_app</div><div style="position:absolute;left:41px;top:245.34px;font:12px 'Liberation Sans', sans-serif;line-height:15px;letter-spacing:0.000px;color:#000;white-space:pre;transform:scaleX(0.9538);transform-origin:0 0;-webkit-text-stroke:0.15px #000;">project_zero_cc2640r2lp_stack_library</div><div style="position:absolute;left:41px;top:263.34px;font:12px 'Liberation Sans', sans-serif;line-height:15px;letter-spacing:0.000px;color:#000;white-space:pre;transform:scaleX(0.9247);transform-origin:0 0;-webkit-text-stroke:0.15px #000;">rfPacketRx_CC1312R1_LAUNCHXL_nortos_ccs</div><div style="position:absolute;left:41px;top:281.34px;font:12px 'Liberation Sans', sans-serif;line-height:15px;letter-spacing:0.000px;color:#000;white-space:pre;transform:scaleX(0.9304);transform-origin:0 0;-webkit-text-stroke:0.15px #000;">rfPacketRx_CC1350_LAUNCHXL_nortos_ccs</div><div style="position:absolute;left:41px;top:299.34px;font:12px 'Liberation Sans', sans-serif;line-height:15px;letter-spacing:0.000px;color:#000;white-space:pre;transform:scaleX(0.9256);transform-origin:0 0;-webkit-text-stroke:0.15px #000;">rfPacketTx_CC1312R1_LAUNCHXL_nortos_ccs</div><div style="position:absolute;left:41px;top:317.34px;font:12px 'Liberation Sans', sans-serif;line-height:15px;letter-spacing:0.000px;color:#000;white-space:pre;transform:scaleX(0.9366);transform-origin:0 0;width:299.0px;overflow:hidden;-webkit-text-stroke:0.15px #000;">rfWakeOnRadioRx_CC1312R1_LAUNCHXL_nortos_ccs</div><div style="position:absolute;left:41px;top:335.34px;font:12px 'Liberation Sans', sans-serif;line-height:15px;letter-spacing:0.000px;color:#000;white-space:pre;transform:scaleX(0.9580);transform-origin:0 0;-webkit-text-stroke:0.15px #000;">running_sensor_cc2650em_app</div><div style="position:absolute;left:41px;top:353.34px;font:12px 'Liberation Sans', sans-serif;line-height:15px;letter-spacing:0.000px;color:#000;white-space:pre;transform:scaleX(0.9566);transform-origin:0 0;-webkit-text-stroke:0.15px #000;">running_sensor_cc2650em_stack</div><div style="position:absolute;left:41px;top:371.34px;font:bold 12px 'Liberation Sans', sans-serif;line-height:15px;letter-spacing:0.000px;color:#000;white-space:pre;transform:scaleX(0.9776);transform-origin:0 0;">SDI  [Active - Dyno_PM]</div><div style="position:absolute;left:57px;top:389.34px;font:12px 'Liberation Sans', sans-serif;line-height:15px;letter-spacing:0.000px;color:#000;white-space:pre;transform:scaleX(0.9562);transform-origin:0 0;-webkit-text-stroke:0.15px #000;">Binaries</div><div style="position:absolute;left:57px;top:407.34px;font:12px 'Liberation Sans', sans-serif;line-height:15px;letter-spacing:0.000px;color:#000;white-space:pre;transform:scaleX(1.0070);transform-origin:0 0;-webkit-text-stroke:0.15px #000;">Includes</div><div style="position:absolute;left:57px;top:425.34px;font:12px 'Liberation Sans', sans-serif;line-height:15px;letter-spacing:0.000px;color:#000;white-space:pre;transform:scaleX(0.9044);transform-origin:0 0;-webkit-text-stroke:0.15px #000;">CUSTOMER</div><div style="position:absolute;left:57px;top:443.34px;font:12px 'Liberation Sans', sans-serif;line-height:15px;letter-spacing:0.000px;color:#000;white-space:pre;transform:scaleX(1.0069);transform-origin:0 0;-webkit-text-stroke:0.15px #000;">Debug</div><div style="position:absolute;left:57px;top:461.34px;font:12px 'Liberation Sans', sans-serif;line-height:15px;letter-spacing:0.000px;color:#000;white-space:pre;transform:scaleX(0.9867);transform-origin:0 0;-webkit-text-stroke:0.15px #000;">Dyno_PM</div><div style="position:absolute;left:57px;top:479.34px;font:12px 'Liberation Sans', sans-serif;line-height:15px;letter-spacing:0.000px;color:#000;white-space:pre;transform:scaleX(1.0533);transform-origin:0 0;-webkit-text-stroke:0.15px #000;">include</div><div style="position:absolute;left:57px;top:497.34px;font:12px 'Liberation Sans', sans-serif;line-height:15px;letter-spacing:0.000px;color:#000;white-space:pre;transform:scaleX(1.0261);transform-origin:0 0;-webkit-text-stroke:0.15px #000;">library</div><div style="position:absolute;left:57px;top:515.34px;font:12px 'Liberation Sans', sans-serif;line-height:15px;letter-spacing:0.000px;color:#000;white-space:pre;transform:scaleX(1.0231);transform-origin:0 0;-webkit-text-stroke:0.15px #000;">targetConfigs</div><div style="position:absolute;left:57px;top:533.34px;font:12px 'Liberation Sans', sans-serif;line-height:15px;letter-spacing:0.000px;color:#000;white-space:pre;transform:scaleX(0.9424);transform-origin:0 0;-webkit-text-stroke:0.15px #000;">uds_server</div><div style="position:absolute;left:57px;top:551.34px;font:12px 'Liberation Sans', sans-serif;line-height:15px;letter-spacing:0.000px;color:#000;white-space:pre;transform:scaleX(0.9722);transform-origin:0 0;-webkit-text-stroke:0.15px #000;">CodeStartBranch.asm</div><div style="position:absolute;left:57px;top:569.34px;font:12px 'Liberation Sans', sans-serif;line-height:15px;letter-spacing:0.000px;color:#000;white-space:pre;transform:scaleX(0.9308);transform-origin:0 0;-webkit-text-stroke:0.15px #000;">F2837xD_GlobalVariableDefs.c</div><div style="position:absolute;left:57px;top:587.34px;font:12px 'Liberation Sans', sans-serif;line-height:15px;letter-spacing:0.000px;color:#000;white-space:pre;transform:scaleX(0.9222);transform-origin:0 0;-webkit-text-stroke:0.15px #000;">F2837xD_Headers_BIOS_cpu1.cmd</div><div style="position:absolute;left:368px;top:79.34px;font:12px 'Liberation Sans', sans-serif;line-height:15px;letter-spacing:0.000px;color:#000;white-space:pre;transform:scaleX(0.9895);transform-origin:0 0;-webkit-text-stroke:0.15px #000;">Debug</div><div style="position:absolute;left:385px;top:101.34px;font:12px 'Liberation Sans', sans-serif;line-height:15px;letter-spacing:0.000px;color:#000;white-space:pre;transform:scaleX(0.9830);transform-origin:0 0;-webkit-text-stroke:0.15px #000;">SDI [Code Composer Studio - Device Debugging]</div><div style="position:absolute;left:402px;top:119.34px;font:12px 'Liberation Sans', sans-serif;line-height:15px;letter-spacing:0.000px;color:#000;white-space:pre;transform:scaleX(0.9369);transform-origin:0 0;-webkit-text-stroke:0.15px #000;">Texas Instruments XDS100v2 USB Debug Probe_0/C28xx_CPU1 (Suspended - SW Breakpoint)</div><div style="position:absolute;left:417.3px;top:137.34px;font:12px 'Liberation Sans', sans-serif;line-height:15px;letter-spacing:0.000px;color:#000;white-space:pre;transform:scaleX(0.9639);transform-origin:0 0;-webkit-text-stroke:0.15px #000;">c_int00() at boot_cg.asm:94 0x0890F3  (the entry point was reached)</div><div style="position:absolute;left:402px;top:155.34px;font:12px 'Liberation Sans', sans-serif;line-height:15px;letter-spacing:0.000px;color:#000;white-space:pre;transform:scaleX(0.9476);transform-origin:0 0;-webkit-text-stroke:0.15px #000;">Texas Instruments XDS100v2 USB Debug Probe_0/CPU1_CLA1 (Disconnected : Unknown)</div><div style="position:absolute;left:402px;top:173.34px;font:12px 'Liberation Sans', sans-serif;line-height:15px;letter-spacing:0.000px;color:#000;white-space:pre;transform:scaleX(0.9440);transform-origin:0 0;-webkit-text-stroke:0.15px #000;">Texas Instruments XDS100v2 USB Debug Probe_0/C28xx_CPU2 (Disconnected : Unknown)</div><div style="position:absolute;left:402px;top:191.34px;font:12px 'Liberation Sans', sans-serif;line-height:15px;letter-spacing:0.000px;color:#000;white-space:pre;transform:scaleX(0.9476);transform-origin:0 0;-webkit-text-stroke:0.15px #000;">Texas Instruments XDS100v2 USB Debug Probe_0/CPU2_CLA1 (Disconnected : Unknown)</div><div style="position:absolute;left:368px;top:271.34px;font:12px 'Liberation Sans', sans-serif;line-height:15px;letter-spacing:0.000px;color:#000;white-space:pre;transform:scaleX(1.0191);transform-origin:0 0;-webkit-text-stroke:0.15px #000;">main.c</div><div style="position:absolute;left:452px;top:271.34px;font:12px 'Liberation Sans', sans-serif;line-height:15px;letter-spacing:0.000px;color:#000;white-space:pre;transform:scaleX(1.0482);transform-origin:0 0;-webkit-text-stroke:0.15px #000;">main.c</div><div style="position:absolute;left:537px;top:271.34px;font:12px 'Liberation Sans', sans-serif;line-height:15px;letter-spacing:0.000px;color:#000;white-space:pre;transform:scaleX(0.9334);transform-origin:0 0;-webkit-text-stroke:0.15px #000;">msp432p401x_...</div><div style="position:absolute;left:671px;top:271.34px;font:12px 'Liberation Sans', sans-serif;line-height:15px;letter-spacing:0.000px;color:#000;white-space:pre;transform:scaleX(0.9534);transform-origin:0 0;-webkit-text-stroke:0.15px #000;">adc_soc_con...</div><div style="position:absolute;left:800px;top:271.34px;font:12px 'Liberation Sans', sans-serif;line-height:15px;letter-spacing:0.000px;color:#000;white-space:pre;transform:scaleX(0.9175);transform-origin:0 0;-webkit-text-stroke:0.15px #000;">SDI.c</div><div style="position:absolute;left:876px;top:271.34px;font:12px 'Liberation Sans', sans-serif;line-height:15px;letter-spacing:0.000px;color:#000;white-space:pre;transform:scaleX(0.9748);transform-origin:0 0;-webkit-text-stroke:0.15px #000;">boot_cg.asm</div><div style="position:absolute;left:367px;top:539.34px;font:12px 'Liberation Sans', sans-serif;line-height:15px;letter-spacing:0.000px;color:#000;white-space:pre;-webkit-text-stroke:0.15px #000;">Console</div><div style="position:absolute;left:345px;top:560.34px;font:12px 'Liberation Sans', sans-serif;line-height:15px;letter-spacing:0.000px;color:#000;white-space:pre;transform:scaleX(0.8419);transform-origin:0 0;-webkit-text-stroke:0.15px #000;">SDI</div>
</body></html>
